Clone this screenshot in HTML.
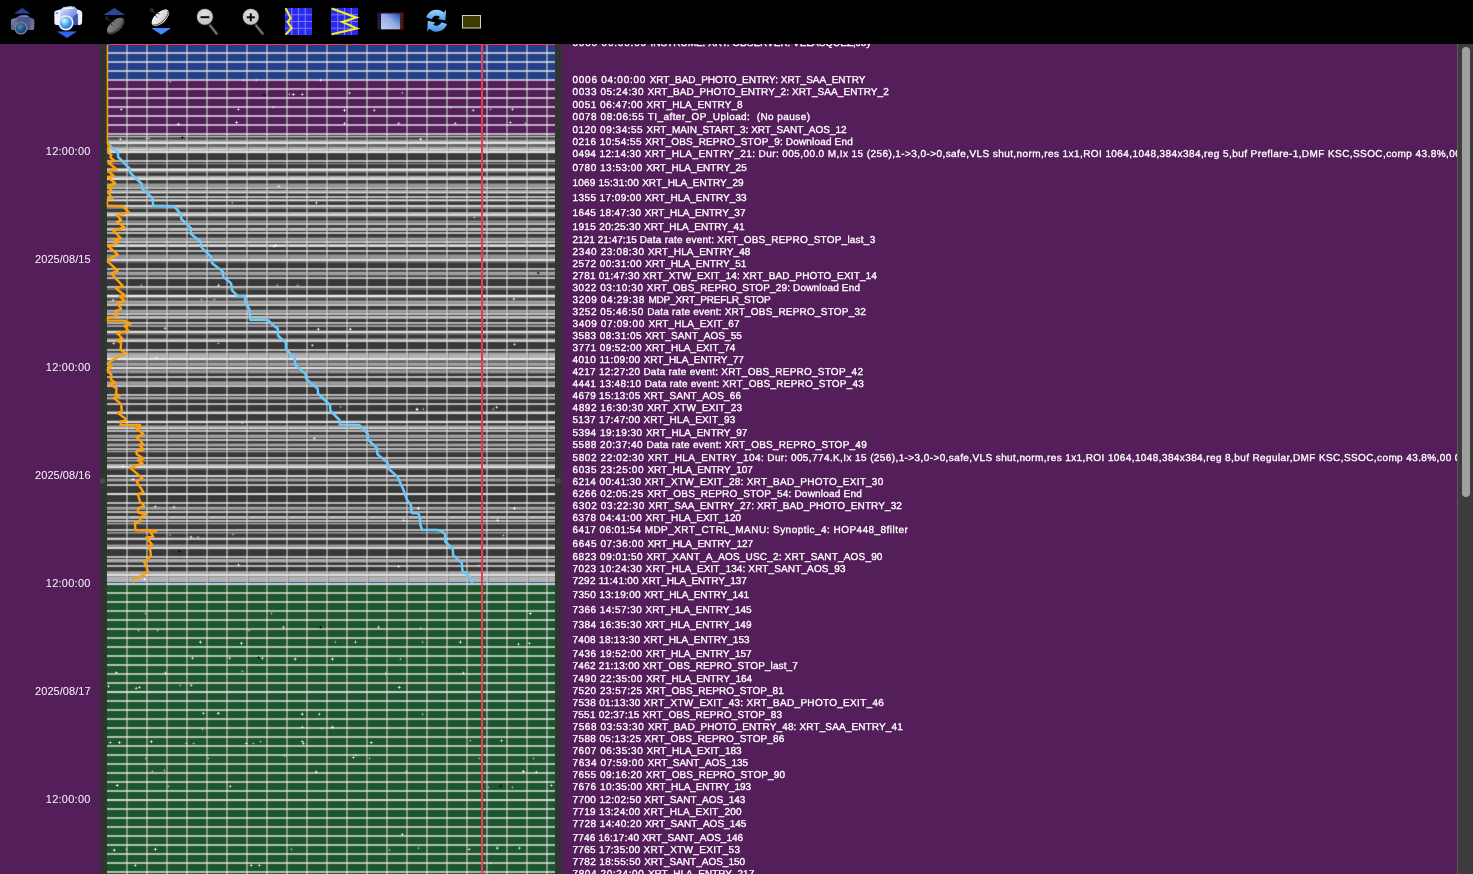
<!DOCTYPE html>
<html lang="en"><head><meta charset="utf-8"><title>XRT Timeline</title>
<style>
html,body{margin:0;padding:0}
body{width:1473px;height:874px;overflow:hidden;position:relative;background:#541e5a;font-family:"Liberation Sans", sans-serif;color:#fff}
#tb{position:absolute;left:0;top:0;width:1473px;height:44px;background:#000}
.lab{position:absolute;right:9.3px;font-size:11px;line-height:13px;white-space:pre;color:#fbf8fc;letter-spacing:0.22px}
.strip{position:absolute;top:44px;height:830px;background:#333}
#txt{position:absolute;left:562px;top:44px;width:894.5px;height:830px;overflow:hidden;will-change:transform}
#labs{position:absolute;left:0;top:44px;width:100px;height:830px;will-change:transform}
.ln{position:absolute;left:10.5px;font-size:10px;line-height:12px;white-space:pre;color:#fff;text-rendering:geometricPrecision;-webkit-text-stroke:0.32px #fff}
.pre{letter-spacing:0.73px}
#sb{position:absolute;left:1457px;top:44px;width:16px;height:830px;background:#3c3c3c;border-left:1px solid #5a5a5a;box-sizing:border-box}
#th{position:absolute;left:4px;top:3px;width:8px;height:450px;border-radius:4px;background:#a0a0a0}
</style></head><body>
<div id="tb"><svg width="500" height="44" viewBox="0 0 500 44" style="position:absolute;left:0;top:0">
<defs>
<radialGradient id="lensD" cx="0.4" cy="0.35" r="0.7"><stop offset="0" stop-color="#4f8f9f"/><stop offset="0.6" stop-color="#1f5a92"/><stop offset="1" stop-color="#12305e"/></radialGradient>
<radialGradient id="lensB" cx="0.35" cy="0.3" r="0.75"><stop offset="0" stop-color="#dcf9ff"/><stop offset="0.5" stop-color="#5cbaf2"/><stop offset="1" stop-color="#1a6ad0"/></radialGradient>
<linearGradient id="bodyD" x1="0" y1="0" x2="1" y2="1"><stop offset="0" stop-color="#8088a2"/><stop offset="0.5" stop-color="#5a6590"/><stop offset="1" stop-color="#767c96"/></linearGradient>
<linearGradient id="bodyB" x1="0" y1="0" x2="1" y2="1"><stop offset="0" stop-color="#eef0ff"/><stop offset="0.5" stop-color="#8fa2e6"/><stop offset="1" stop-color="#e8ecff"/></linearGradient>
<linearGradient id="dishD" x1="0" y1="0" x2="1" y2="1"><stop offset="0" stop-color="#8a8a8a"/><stop offset="1" stop-color="#5a5a5a"/></linearGradient>
<linearGradient id="dishB" x1="0" y1="0" x2="1" y2="1"><stop offset="0" stop-color="#ffffff"/><stop offset="1" stop-color="#c4c4c4"/></linearGradient>
<radialGradient id="mag" cx="0.45" cy="0.3" r="0.8"><stop offset="0" stop-color="#e2e2e2"/><stop offset="1" stop-color="#bcbcbc"/></radialGradient>
<linearGradient id="sky" x1="1" y1="0" x2="0" y2="1"><stop offset="0" stop-color="#1c48b8"/><stop offset="0.45" stop-color="#8fa8e0"/><stop offset="1" stop-color="#c6d4f4"/></linearGradient>
<linearGradient id="ref" x1="0" y1="0" x2="0" y2="1"><stop offset="0" stop-color="#9fd4ff"/><stop offset="1" stop-color="#4a9ce6"/></linearGradient>
<linearGradient id="bodyB2" x1="0" y1="0" x2="1" y2="1"><stop offset="0" stop-color="#e4e9ff"/><stop offset="0.5" stop-color="#8ea2ea"/><stop offset="1" stop-color="#4a66cc"/></linearGradient>
<linearGradient id="ref2" x1="0" y1="0" x2="0" y2="1"><stop offset="0" stop-color="#86c6fa"/><stop offset="1" stop-color="#3f92e0"/></linearGradient>
</defs>
<!-- 1 dim camera + up triangle -->
<polygon points="22.2,8.1 30.6,13.4 14,13.4" fill="#28409c"/>
<g transform="translate(10.9 15.4) scale(0.84 0.78) translate(-54.3 -6.3)">
<g id="camshape">
<path d="M54.3 13.5 Q54 10.8 57 10.3 L60.5 9.6 L63.5 7.2 L70 6.3 L74.5 6.8 L77.2 9.4 L80.6 10.4 Q82.4 11 82.3 14 L82 23 Q81.8 25 79.5 25 L56.5 25 Q54.4 25 54.4 23 Z" fill="url(#bodyD)"/>
</g>
</g>
<path d="M17.5 17.2 L20 15.4 L27.5 15.2 L29.8 17.3 L30.5 29.8 L17 29.8 Z" fill="#46568e" opacity="0.85"/>
<path d="M19 16.6 L21 15.6 L26.6 15.5 L28.6 17 Z" fill="#9aa0b8" opacity="0.8"/>
<circle cx="20.9" cy="28.2" r="6.4" fill="#80859a"/>
<circle cx="20.9" cy="28.2" r="5.4" fill="#565c78"/>
<circle cx="20.9" cy="28.2" r="4.8" fill="url(#lensD)"/>
<!-- 2 bright camera + down triangle -->
<path d="M54.3 13.5 Q54 10.8 57 10.3 L60.5 9.6 L63.5 7.2 L70 6.3 L74.5 6.8 L77.2 9.4 L80.6 10.4 Q82.4 11 82.3 14 L82 23 Q81.8 25 79.5 25 L56.5 25 Q54.4 25 54.4 23 Z" fill="#eef0ff"/>
<path d="M60.6 10.4 L63.6 7.6 L70 6.7 L74.2 7.2 L76.8 9.8 L78 25 L60 25 Z" fill="url(#bodyB2)"/>
<path d="M62.6 9.4 L64.6 7.9 L71.5 7.2 L74 8.8 Z" fill="#f4f6ff"/>
<rect x="55.6" y="12.6" width="2.6" height="0.9" fill="#2a3c9a"/>
<path d="M73.5 16 L78 13.5 L78 25 L72 25 Z" fill="#2f4cb0" opacity="0.8"/>
<circle cx="65.9" cy="22.8" r="7.6" fill="#f2f4ff"/>
<circle cx="65.9" cy="22.8" r="6.3" fill="#a9b4dc"/>
<circle cx="65.9" cy="22.8" r="5.7" fill="url(#lensB)"/>
<polygon points="56.8,31.5 77.1,31.5 67,37.9" fill="#3a5cf2"/>
<!-- 3 dim dish + up triangle -->
<polygon points="114.2,8.1 125.2,15.1 103.5,15.1" fill="#2c4690"/>
<g transform="rotate(-42 115.4 25.6)"><ellipse cx="115.4" cy="26.1" rx="10.8" ry="5.4" fill="#5e5e5e"/><ellipse cx="115.4" cy="25.3" rx="10.3" ry="4.6" fill="url(#dishD)"/><path d="M105.2 26.1 A10.3 4.7 0 0 0 125.6 26.1" fill="none" stroke="#1e1e1e" stroke-width="0.8"/></g>
<circle cx="107.0" cy="18.3" r="1.5" fill="none" stroke="#3a3a3a" stroke-width="0.9"/>
<path d="M108.0 19.4 L112.4 25.8 M108.8 20.0 L114.9 22.2" stroke="#1e1e1e" stroke-width="0.8" fill="none"/>
<!-- 4 bright dish + down triangle -->
<g transform="rotate(-42 160.1 17.5)"><ellipse cx="160.1" cy="18.0" rx="10.8" ry="5.4" fill="#d8d8d8"/><ellipse cx="160.1" cy="17.2" rx="10.3" ry="4.6" fill="url(#dishB)"/><path d="M149.9 18.0 A10.3 4.7 0 0 0 170.3 18.0" fill="none" stroke="#303030" stroke-width="0.8"/></g>
<circle cx="151.7" cy="10.2" r="1.5" fill="none" stroke="#555" stroke-width="0.9"/>
<path d="M152.7 11.3 L157.1 17.7 M153.5 11.9 L159.6 14.1" stroke="#303030" stroke-width="0.8" fill="none"/>
<polygon points="151.3,28.1 171,28.1 161.3,34.8" fill="#4a86ff"/>
<!-- 5 zoom out -->
<path d="M210 25.4 L216.6 33.6" stroke="#333" stroke-width="3.4" stroke-linecap="round"/>
<path d="M210 25.4 L216.6 33.6" stroke="#8c8c8c" stroke-width="1.2" stroke-linecap="round"/>
<circle cx="204.9" cy="16.9" r="8.6" fill="#262626"/>
<circle cx="204.9" cy="16.9" r="7.9" fill="url(#mag)"/>
<rect x="200.5" y="16.2" width="8.8" height="2" fill="#0a0a0a"/>
<!-- 6 zoom in -->
<path d="M256 25.4 L262.6 33.6" stroke="#333" stroke-width="3.4" stroke-linecap="round"/>
<path d="M256 25.4 L262.6 33.6" stroke="#8c8c8c" stroke-width="1.2" stroke-linecap="round"/>
<circle cx="250.8" cy="16.9" r="8.6" fill="#262626"/>
<circle cx="250.8" cy="16.9" r="7.9" fill="url(#mag)"/>
<rect x="246.7" y="16.3" width="8.2" height="2" fill="#0a0a0a"/>
<rect x="249.8" y="13.3" width="2" height="8" fill="#0a0a0a"/>
<!-- 7 grid + line -->
<rect x="285" y="8" width="27" height="27" fill="#2828f0"/>
<path d="M291.75 8V35M298.5 8V35M305.25 8V35M285 14.75H312M285 21.5H312M285 28.25H312" stroke="#fff" stroke-opacity="0.38" stroke-width="1.1"/>
<polyline points="285.6,8.2 290.7,18.1 287.6,21.9 291.6,28.1 285.6,34.6" fill="none" stroke="#f2f21a" stroke-width="2.1"/>
<!-- 8 grid + zigzag -->
<rect x="331" y="8" width="27" height="27" fill="#2828f0"/>
<path d="M337.75 8V35M344.5 8V35M351.25 8V35M331 14.75H358M331 21.5H358M331 28.25H358" stroke="#fff" stroke-opacity="0.38" stroke-width="1.1"/>
<polyline points="331.6,8.6 356.4,17.5 342.2,21.9 356.9,28.4 331.6,34.3" fill="none" stroke="#f2f21a" stroke-width="2.1"/>
<!-- 9 film -->
<rect x="377.4" y="12.1" width="13" height="18" fill="#15152e"/>
<rect x="390.4" y="12.1" width="13.4" height="18" fill="#480c0c"/>
<rect x="381" y="13.4" width="19.2" height="15.8" rx="1" fill="url(#sky)"/>
<path d="M379 14v1.5M379 17v1.5M379 20v1.5M379 23v1.5M379 26v1.5M402 14v1.5M402 17v1.5M402 20v1.5M402 23v1.5M402 26v1.5" stroke="#3c3c44" stroke-width="1.2"/>
<!-- 10 refresh -->
<path d="M426.14 17.30 A11.0 11.0 0 0 1 443.96 12.53 L445.98 9.52 L445.40 20.55 L438.01 19.01 L439.95 16.98 A5.0 5.0 0 0 0 431.84 19.15 Z" fill="url(#ref)"/>
<path d="M447.06 24.10 A11.0 11.0 0 0 1 429.24 28.87 L427.22 31.88 L427.80 20.85 L435.19 22.39 L433.25 24.42 A5.0 5.0 0 0 0 441.36 22.25 Z" fill="url(#ref2)"/>
<!-- 11 olive -->
<rect x="462.5" y="15.5" width="18" height="12.5" fill="#3c3c00" stroke="#d6d0c2" stroke-width="1"/>
</svg>
</div>
<div id="labs"><div class="lab" style="top:100.69px;letter-spacing:0.26px">12:00:00</div><div class="lab" style="top:208.69px;letter-spacing:0.06px">2025/08/15</div><div class="lab" style="top:316.69px;letter-spacing:0.26px">12:00:00</div><div class="lab" style="top:424.69px;letter-spacing:0.06px">2025/08/16</div><div class="lab" style="top:532.69px;letter-spacing:0.26px">12:00:00</div><div class="lab" style="top:640.69px;letter-spacing:0.06px">2025/08/17</div><div class="lab" style="top:748.69px;letter-spacing:0.26px">12:00:00</div></div>
<div class="strip" style="left:100px;width:7px"></div>
<div class="strip" style="left:555px;width:7px"></div>
<svg width="449" height="830" viewBox="106 44 449 830" style="position:absolute;left:106px;top:44px;overflow:hidden">
<defs><clipPath id="oc"><rect x="106.7" y="45" width="460" height="840"/></clipPath></defs>
<g shape-rendering="crispEdges">
<rect x="107" y="44" width="448" height="36" fill="#22408c"/>
<rect x="107" y="80" width="448" height="55" fill="#541e5a"/>
<rect x="107" y="135" width="448" height="1" fill="#626262"/>
<rect x="107" y="136" width="448" height="1" fill="#a9a9a9"/>
<rect x="107" y="137" width="448" height="1" fill="#686868"/>
<rect x="107" y="138" width="448" height="1" fill="#4a4a4a"/>
<rect x="107" y="139" width="448" height="1" fill="#626262"/>
<rect x="107" y="140" width="448" height="1" fill="#949494"/>
<rect x="107" y="141" width="448" height="1" fill="#ababab"/>
<rect x="107" y="142" width="448" height="1" fill="#c4c4c4"/>
<rect x="107" y="143" width="448" height="1" fill="#ababab"/>
<rect x="107" y="144" width="448" height="1" fill="#6f6f6f"/>
<rect x="107" y="145" width="448" height="1" fill="#676767"/>
<rect x="107" y="146" width="448" height="1" fill="#737373"/>
<rect x="107" y="147" width="448" height="1" fill="#a1a1a1"/>
<rect x="107" y="148" width="448" height="1" fill="#b1b1b1"/>
<rect x="107" y="149" width="448" height="1" fill="#d0d0d0"/>
<rect x="107" y="150" width="448" height="1" fill="#bbbbbb"/>
<rect x="107" y="151" width="448" height="1" fill="#949494"/>
<rect x="107" y="152" width="448" height="1" fill="#7f7f7f"/>
<rect x="107" y="153" width="448" height="1" fill="#424242"/>
<rect x="107" y="154" width="448" height="8" fill="#383838"/>
<rect x="107" y="162" width="448" height="1" fill="#414141"/>
<rect x="107" y="163" width="448" height="1" fill="#767676"/>
<rect x="107" y="164" width="448" height="1" fill="#575757"/>
<rect x="107" y="165" width="448" height="1" fill="#3b3b3b"/>
<rect x="107" y="166" width="448" height="1" fill="#383838"/>
<rect x="107" y="167" width="448" height="1" fill="#444444"/>
<rect x="107" y="168" width="448" height="1" fill="#979797"/>
<rect x="107" y="169" width="448" height="1" fill="#bdbdbd"/>
<rect x="107" y="170" width="448" height="1" fill="#b4b4b4"/>
<rect x="107" y="171" width="448" height="1" fill="#7e7e7e"/>
<rect x="107" y="172" width="448" height="1" fill="#6b6b6b"/>
<rect x="107" y="173" width="448" height="1" fill="#3f3f3f"/>
<rect x="107" y="174" width="448" height="1" fill="#3b3b3b"/>
<rect x="107" y="175" width="448" height="1" fill="#575757"/>
<rect x="107" y="176" width="448" height="1" fill="#9f9f9f"/>
<rect x="107" y="177" width="448" height="1" fill="#b7b7b7"/>
<rect x="107" y="178" width="448" height="1" fill="#bfbfbf"/>
<rect x="107" y="179" width="448" height="1" fill="#999999"/>
<rect x="107" y="180" width="448" height="1" fill="#454545"/>
<rect x="107" y="181" width="448" height="1" fill="#383838"/>
<rect x="107" y="182" width="448" height="1" fill="#3e3e3e"/>
<rect x="107" y="183" width="448" height="1" fill="#686868"/>
<rect x="107" y="184" width="448" height="1" fill="#939393"/>
<rect x="107" y="185" width="448" height="1" fill="#999999"/>
<rect x="107" y="186" width="448" height="1" fill="#8d8d8d"/>
<rect x="107" y="187" width="448" height="1" fill="#444444"/>
<rect x="107" y="188" width="448" height="1" fill="#383838"/>
<rect x="107" y="189" width="448" height="1" fill="#444444"/>
<rect x="107" y="190" width="448" height="1" fill="#909090"/>
<rect x="107" y="191" width="448" height="1" fill="#b2b2b2"/>
<rect x="107" y="192" width="448" height="1" fill="#cecece"/>
<rect x="107" y="193" width="448" height="1" fill="#848484"/>
<rect x="107" y="194" width="448" height="1" fill="#414141"/>
<rect x="107" y="195" width="448" height="3" fill="#383838"/>
<rect x="107" y="198" width="448" height="1" fill="#474747"/>
<rect x="107" y="199" width="448" height="1" fill="#aaaaaa"/>
<rect x="107" y="200" width="448" height="1" fill="#cccccc"/>
<rect x="107" y="201" width="448" height="1" fill="#767676"/>
<rect x="107" y="202" width="448" height="1" fill="#3f3f3f"/>
<rect x="107" y="203" width="448" height="1" fill="#3a3a3a"/>
<rect x="107" y="204" width="448" height="1" fill="#4e4e4e"/>
<rect x="107" y="205" width="448" height="1" fill="#808080"/>
<rect x="107" y="206" width="448" height="1" fill="#888888"/>
<rect x="107" y="207" width="448" height="1" fill="#878787"/>
<rect x="107" y="208" width="448" height="1" fill="#787878"/>
<rect x="107" y="209" width="448" height="1" fill="#414141"/>
<rect x="107" y="210" width="448" height="1" fill="#383838"/>
<rect x="107" y="211" width="448" height="1" fill="#444444"/>
<rect x="107" y="212" width="448" height="1" fill="#979797"/>
<rect x="107" y="213" width="448" height="1" fill="#b9b9b9"/>
<rect x="107" y="214" width="448" height="1" fill="#9e9e9e"/>
<rect x="107" y="215" width="448" height="1" fill="#939393"/>
<rect x="107" y="216" width="448" height="1" fill="#6f6f6f"/>
<rect x="107" y="217" width="448" height="1" fill="#5a5a5a"/>
<rect x="107" y="218" width="448" height="1" fill="#3c3c3c"/>
<rect x="107" y="219" width="448" height="1" fill="#3d3d3d"/>
<rect x="107" y="220" width="448" height="1" fill="#616161"/>
<rect x="107" y="221" width="448" height="1" fill="#8e8e8e"/>
<rect x="107" y="222" width="448" height="1" fill="#777777"/>
<rect x="107" y="223" width="448" height="1" fill="#4e4e4e"/>
<rect x="107" y="224" width="448" height="1" fill="#464646"/>
<rect x="107" y="225" width="448" height="1" fill="#3a3a3a"/>
<rect x="107" y="226" width="448" height="1" fill="#3c3c3c"/>
<rect x="107" y="227" width="448" height="1" fill="#5f5f5f"/>
<rect x="107" y="228" width="448" height="1" fill="#b5b5b5"/>
<rect x="107" y="229" width="448" height="1" fill="#c0c0c0"/>
<rect x="107" y="230" width="448" height="1" fill="#a0a0a0"/>
<rect x="107" y="231" width="448" height="1" fill="#464646"/>
<rect x="107" y="232" width="448" height="4" fill="#383838"/>
<rect x="107" y="236" width="448" height="1" fill="#3d3d3d"/>
<rect x="107" y="237" width="448" height="1" fill="#686868"/>
<rect x="107" y="238" width="448" height="1" fill="#9e9e9e"/>
<rect x="107" y="239" width="448" height="1" fill="#999999"/>
<rect x="107" y="240" width="448" height="1" fill="#868686"/>
<rect x="107" y="241" width="448" height="1" fill="#5a5a5a"/>
<rect x="107" y="242" width="448" height="1" fill="#505050"/>
<rect x="107" y="243" width="448" height="1" fill="#4b4b4b"/>
<rect x="107" y="244" width="448" height="1" fill="#b0b0b0"/>
<rect x="107" y="245" width="448" height="1" fill="#d5d5d5"/>
<rect x="107" y="246" width="448" height="1" fill="#c5c5c5"/>
<rect x="107" y="247" width="448" height="1" fill="#4b4b4b"/>
<rect x="107" y="248" width="448" height="5" fill="#383838"/>
<rect x="107" y="253" width="448" height="1" fill="#3e3e3e"/>
<rect x="107" y="254" width="448" height="1" fill="#666666"/>
<rect x="107" y="255" width="448" height="1" fill="#8e8e8e"/>
<rect x="107" y="256" width="448" height="2" fill="#949494"/>
<rect x="107" y="258" width="448" height="1" fill="#929292"/>
<rect x="107" y="259" width="448" height="1" fill="#909090"/>
<rect x="107" y="260" width="448" height="1" fill="#8b8b8b"/>
<rect x="107" y="261" width="448" height="1" fill="#6b6b6b"/>
<rect x="107" y="262" width="448" height="1" fill="#606060"/>
<rect x="107" y="263" width="448" height="1" fill="#3e3e3e"/>
<rect x="107" y="264" width="448" height="6" fill="#383838"/>
<rect x="107" y="270" width="448" height="1" fill="#3c3c3c"/>
<rect x="107" y="271" width="448" height="1" fill="#5f5f5f"/>
<rect x="107" y="272" width="448" height="1" fill="#9e9e9e"/>
<rect x="107" y="273" width="448" height="1" fill="#a0a0a0"/>
<rect x="107" y="274" width="448" height="1" fill="#949494"/>
<rect x="107" y="275" width="448" height="1" fill="#686868"/>
<rect x="107" y="276" width="448" height="1" fill="#3e3e3e"/>
<rect x="107" y="277" width="448" height="8" fill="#383838"/>
<rect x="107" y="285" width="448" height="1" fill="#3a3a3a"/>
<rect x="107" y="286" width="448" height="1" fill="#464646"/>
<rect x="107" y="287" width="448" height="1" fill="#4b4b4b"/>
<rect x="107" y="288" width="448" height="1" fill="#616161"/>
<rect x="107" y="289" width="448" height="1" fill="#636363"/>
<rect x="107" y="290" width="448" height="1" fill="#3e3e3e"/>
<rect x="107" y="291" width="448" height="2" fill="#383838"/>
<rect x="107" y="293" width="448" height="1" fill="#3c3c3c"/>
<rect x="107" y="294" width="448" height="1" fill="#636363"/>
<rect x="107" y="295" width="448" height="1" fill="#c1c1c1"/>
<rect x="107" y="296" width="448" height="1" fill="#c5c5c5"/>
<rect x="107" y="297" width="448" height="1" fill="#828282"/>
<rect x="107" y="298" width="448" height="1" fill="#626262"/>
<rect x="107" y="299" width="448" height="1" fill="#444444"/>
<rect x="107" y="300" width="448" height="1" fill="#717171"/>
<rect x="107" y="301" width="448" height="1" fill="#9e9e9e"/>
<rect x="107" y="302" width="448" height="1" fill="#9b9b9b"/>
<rect x="107" y="303" width="448" height="1" fill="#919191"/>
<rect x="107" y="304" width="448" height="1" fill="#606060"/>
<rect x="107" y="305" width="448" height="1" fill="#545454"/>
<rect x="107" y="306" width="448" height="1" fill="#3c3c3c"/>
<rect x="107" y="307" width="448" height="1" fill="#383838"/>
<rect x="107" y="308" width="448" height="1" fill="#3b3b3b"/>
<rect x="107" y="309" width="448" height="1" fill="#575757"/>
<rect x="107" y="310" width="448" height="2" fill="#9c9c9c"/>
<rect x="107" y="312" width="448" height="1" fill="#8b8b8b"/>
<rect x="107" y="313" width="448" height="1" fill="#585858"/>
<rect x="107" y="314" width="448" height="1" fill="#4d4d4d"/>
<rect x="107" y="315" width="448" height="1" fill="#4c4c4c"/>
<rect x="107" y="316" width="448" height="1" fill="#b4b4b4"/>
<rect x="107" y="317" width="448" height="1" fill="#c1c1c1"/>
<rect x="107" y="318" width="448" height="1" fill="#999999"/>
<rect x="107" y="319" width="448" height="1" fill="#454545"/>
<rect x="107" y="320" width="448" height="3" fill="#383838"/>
<rect x="107" y="323" width="448" height="1" fill="#393939"/>
<rect x="107" y="324" width="448" height="1" fill="#4b4b4b"/>
<rect x="107" y="325" width="448" height="1" fill="#8f8f8f"/>
<rect x="107" y="326" width="448" height="1" fill="#8d8d8d"/>
<rect x="107" y="327" width="448" height="1" fill="#444444"/>
<rect x="107" y="328" width="448" height="1" fill="#383838"/>
<rect x="107" y="329" width="448" height="1" fill="#3d3d3d"/>
<rect x="107" y="330" width="448" height="1" fill="#646464"/>
<rect x="107" y="331" width="448" height="1" fill="#a7a7a7"/>
<rect x="107" y="332" width="448" height="1" fill="#a2a2a2"/>
<rect x="107" y="333" width="448" height="1" fill="#757575"/>
<rect x="107" y="334" width="448" height="1" fill="#616161"/>
<rect x="107" y="335" width="448" height="1" fill="#3d3d3d"/>
<rect x="107" y="336" width="448" height="1" fill="#383838"/>
<rect x="107" y="337" width="448" height="1" fill="#3e3e3e"/>
<rect x="107" y="338" width="448" height="1" fill="#6a6a6a"/>
<rect x="107" y="339" width="448" height="1" fill="#9f9f9f"/>
<rect x="107" y="340" width="448" height="1" fill="#838383"/>
<rect x="107" y="341" width="448" height="1" fill="#676767"/>
<rect x="107" y="342" width="448" height="1" fill="#3e3e3e"/>
<rect x="107" y="343" width="448" height="8" fill="#383838"/>
<rect x="107" y="351" width="448" height="1" fill="#3d3d3d"/>
<rect x="107" y="352" width="448" height="1" fill="#686868"/>
<rect x="107" y="353" width="448" height="1" fill="#a0a0a0"/>
<rect x="107" y="354" width="448" height="1" fill="#ababab"/>
<rect x="107" y="355" width="448" height="1" fill="#b0b0b0"/>
<rect x="107" y="356" width="448" height="1" fill="#b1b1b1"/>
<rect x="107" y="357" width="448" height="1" fill="#b8b8b8"/>
<rect x="107" y="358" width="448" height="1" fill="#c9c9c9"/>
<rect x="107" y="359" width="448" height="1" fill="#c0c0c0"/>
<rect x="107" y="360" width="448" height="1" fill="#767676"/>
<rect x="107" y="361" width="448" height="1" fill="#6a6a6a"/>
<rect x="107" y="362" width="448" height="1" fill="#717171"/>
<rect x="107" y="363" width="448" height="1" fill="#9f9f9f"/>
<rect x="107" y="364" width="448" height="1" fill="#a0a0a0"/>
<rect x="107" y="365" width="448" height="1" fill="#929292"/>
<rect x="107" y="366" width="448" height="1" fill="#646464"/>
<rect x="107" y="367" width="448" height="1" fill="#898989"/>
<rect x="107" y="368" width="448" height="1" fill="#8a8a8a"/>
<rect x="107" y="369" width="448" height="1" fill="#6c6c6c"/>
<rect x="107" y="370" width="448" height="1" fill="#888888"/>
<rect x="107" y="371" width="448" height="1" fill="#979797"/>
<rect x="107" y="372" width="448" height="1" fill="#919191"/>
<rect x="107" y="373" width="448" height="1" fill="#5a5a5a"/>
<rect x="107" y="374" width="448" height="1" fill="#3b3b3b"/>
<rect x="107" y="375" width="448" height="5" fill="#383838"/>
<rect x="107" y="380" width="448" height="1" fill="#3f3f3f"/>
<rect x="107" y="381" width="448" height="1" fill="#717171"/>
<rect x="107" y="382" width="448" height="1" fill="#9e9e9e"/>
<rect x="107" y="383" width="448" height="1" fill="#9b9b9b"/>
<rect x="107" y="384" width="448" height="1" fill="#8f8f8f"/>
<rect x="107" y="385" width="448" height="1" fill="#525252"/>
<rect x="107" y="386" width="448" height="1" fill="#464646"/>
<rect x="107" y="387" width="448" height="1" fill="#3a3a3a"/>
<rect x="107" y="388" width="448" height="8" fill="#383838"/>
<rect x="107" y="396" width="448" height="1" fill="#454545"/>
<rect x="107" y="397" width="448" height="1" fill="#999999"/>
<rect x="107" y="398" width="448" height="1" fill="#9e9e9e"/>
<rect x="107" y="399" width="448" height="1" fill="#676767"/>
<rect x="107" y="400" width="448" height="1" fill="#3d3d3d"/>
<rect x="107" y="401" width="448" height="9" fill="#383838"/>
<rect x="107" y="410" width="448" height="1" fill="#404040"/>
<rect x="107" y="411" width="448" height="1" fill="#787878"/>
<rect x="107" y="412" width="448" height="1" fill="#8c8c8c"/>
<rect x="107" y="413" width="448" height="1" fill="#787878"/>
<rect x="107" y="414" width="448" height="1" fill="#404040"/>
<rect x="107" y="415" width="448" height="4" fill="#383838"/>
<rect x="107" y="419" width="448" height="1" fill="#3d3d3d"/>
<rect x="107" y="420" width="448" height="1" fill="#616161"/>
<rect x="107" y="421" width="448" height="1" fill="#919191"/>
<rect x="107" y="422" width="448" height="1" fill="#8c8c8c"/>
<rect x="107" y="423" width="448" height="1" fill="#444444"/>
<rect x="107" y="424" width="448" height="1" fill="#3f3f3f"/>
<rect x="107" y="425" width="448" height="1" fill="#707070"/>
<rect x="107" y="426" width="448" height="1" fill="#999999"/>
<rect x="107" y="427" width="448" height="1" fill="#bcbcbc"/>
<rect x="107" y="428" width="448" height="1" fill="#cbcbcb"/>
<rect x="107" y="429" width="448" height="1" fill="#686868"/>
<rect x="107" y="430" width="448" height="1" fill="#3c3c3c"/>
<rect x="107" y="431" width="448" height="2" fill="#383838"/>
<rect x="107" y="433" width="448" height="1" fill="#3c3c3c"/>
<rect x="107" y="434" width="448" height="1" fill="#5f5f5f"/>
<rect x="107" y="435" width="448" height="1" fill="#9d9d9d"/>
<rect x="107" y="436" width="448" height="1" fill="#9c9c9c"/>
<rect x="107" y="437" width="448" height="1" fill="#8f8f8f"/>
<rect x="107" y="438" width="448" height="1" fill="#4b4b4b"/>
<rect x="107" y="439" width="448" height="1" fill="#393939"/>
<rect x="107" y="440" width="448" height="2" fill="#383838"/>
<rect x="107" y="442" width="448" height="1" fill="#3d3d3d"/>
<rect x="107" y="443" width="448" height="1" fill="#676767"/>
<rect x="107" y="444" width="448" height="2" fill="#9e9e9e"/>
<rect x="107" y="446" width="448" height="1" fill="#676767"/>
<rect x="107" y="447" width="448" height="1" fill="#3d3d3d"/>
<rect x="107" y="448" width="448" height="1" fill="#383838"/>
<rect x="107" y="449" width="448" height="1" fill="#3b3b3b"/>
<rect x="107" y="450" width="448" height="1" fill="#585858"/>
<rect x="107" y="451" width="448" height="1" fill="#969696"/>
<rect x="107" y="452" width="448" height="1" fill="#585858"/>
<rect x="107" y="453" width="448" height="1" fill="#3b3b3b"/>
<rect x="107" y="454" width="448" height="5" fill="#383838"/>
<rect x="107" y="459" width="448" height="1" fill="#444444"/>
<rect x="107" y="460" width="448" height="1" fill="#8d8d8d"/>
<rect x="107" y="461" width="448" height="1" fill="#707070"/>
<rect x="107" y="462" width="448" height="1" fill="#404040"/>
<rect x="107" y="463" width="448" height="1" fill="#4f4f4f"/>
<rect x="107" y="464" width="448" height="1" fill="#a0a0a0"/>
<rect x="107" y="465" width="448" height="1" fill="#aeaeae"/>
<rect x="107" y="466" width="448" height="1" fill="#b2b2b2"/>
<rect x="107" y="467" width="448" height="1" fill="#ababab"/>
<rect x="107" y="468" width="448" height="1" fill="#767676"/>
<rect x="107" y="469" width="448" height="1" fill="#5d5d5d"/>
<rect x="107" y="470" width="448" height="1" fill="#3d3d3d"/>
<rect x="107" y="471" width="448" height="6" fill="#383838"/>
<rect x="107" y="477" width="448" height="1" fill="#3d3d3d"/>
<rect x="107" y="478" width="448" height="1" fill="#676767"/>
<rect x="107" y="479" width="448" height="2" fill="#9e9e9e"/>
<rect x="107" y="481" width="448" height="1" fill="#676767"/>
<rect x="107" y="482" width="448" height="1" fill="#3d3d3d"/>
<rect x="107" y="483" width="448" height="9" fill="#383838"/>
<rect x="107" y="492" width="448" height="1" fill="#434343"/>
<rect x="107" y="493" width="448" height="2" fill="#858585"/>
<rect x="107" y="495" width="448" height="1" fill="#434343"/>
<rect x="107" y="496" width="448" height="9" fill="#383838"/>
<rect x="107" y="505" width="448" height="1" fill="#3b3b3b"/>
<rect x="107" y="506" width="448" height="1" fill="#575757"/>
<rect x="107" y="507" width="448" height="1" fill="#9c9c9c"/>
<rect x="107" y="508" width="448" height="1" fill="#9b9b9b"/>
<rect x="107" y="509" width="448" height="1" fill="#868686"/>
<rect x="107" y="510" width="448" height="1" fill="#424242"/>
<rect x="107" y="511" width="448" height="4" fill="#383838"/>
<rect x="107" y="515" width="448" height="1" fill="#484848"/>
<rect x="107" y="516" width="448" height="1" fill="#afafaf"/>
<rect x="107" y="517" width="448" height="1" fill="#bdbdbd"/>
<rect x="107" y="518" width="448" height="1" fill="#9e9e9e"/>
<rect x="107" y="519" width="448" height="1" fill="#464646"/>
<rect x="107" y="520" width="448" height="1" fill="#383838"/>
<rect x="107" y="521" width="448" height="1" fill="#393939"/>
<rect x="107" y="522" width="448" height="1" fill="#4f4f4f"/>
<rect x="107" y="523" width="448" height="1" fill="#969696"/>
<rect x="107" y="524" width="448" height="1" fill="#616161"/>
<rect x="107" y="525" width="448" height="1" fill="#3c3c3c"/>
<rect x="107" y="526" width="448" height="5" fill="#383838"/>
<rect x="107" y="531" width="448" height="1" fill="#444444"/>
<rect x="107" y="532" width="448" height="1" fill="#888888"/>
<rect x="107" y="533" width="448" height="1" fill="#717171"/>
<rect x="107" y="534" width="448" height="1" fill="#3f3f3f"/>
<rect x="107" y="535" width="448" height="1" fill="#383838"/>
<rect x="107" y="536" width="448" height="1" fill="#3f3f3f"/>
<rect x="107" y="537" width="448" height="1" fill="#6c6c6c"/>
<rect x="107" y="538" width="448" height="1" fill="#7f7f7f"/>
<rect x="107" y="539" width="448" height="1" fill="#5a5a5a"/>
<rect x="107" y="540" width="448" height="1" fill="#3c3c3c"/>
<rect x="107" y="541" width="448" height="2" fill="#383838"/>
<rect x="107" y="543" width="448" height="1" fill="#3e3e3e"/>
<rect x="107" y="544" width="448" height="1" fill="#686868"/>
<rect x="107" y="545" width="448" height="1" fill="#939393"/>
<rect x="107" y="546" width="448" height="1" fill="#959595"/>
<rect x="107" y="547" width="448" height="1" fill="#919191"/>
<rect x="107" y="548" width="448" height="1" fill="#858585"/>
<rect x="107" y="549" width="448" height="1" fill="#434343"/>
<rect x="107" y="550" width="448" height="8" fill="#383838"/>
<rect x="107" y="558" width="448" height="1" fill="#464646"/>
<rect x="107" y="559" width="448" height="1" fill="#9f9f9f"/>
<rect x="107" y="560" width="448" height="1" fill="#acacac"/>
<rect x="107" y="561" width="448" height="1" fill="#a4a4a4"/>
<rect x="107" y="562" width="448" height="1" fill="#6a6a6a"/>
<rect x="107" y="563" width="448" height="1" fill="#3e3e3e"/>
<rect x="107" y="564" width="448" height="6" fill="#383838"/>
<rect x="107" y="570" width="448" height="1" fill="#424242"/>
<rect x="107" y="571" width="448" height="1" fill="#868686"/>
<rect x="107" y="572" width="448" height="1" fill="#a9a9a9"/>
<rect x="107" y="573" width="448" height="1" fill="#adadad"/>
<rect x="107" y="574" width="448" height="1" fill="#b1b1b1"/>
<rect x="107" y="575" width="448" height="1" fill="#acacac"/>
<rect x="107" y="576" width="448" height="1" fill="#9e9e9e"/>
<rect x="107" y="577" width="448" height="1" fill="#aeaeae"/>
<rect x="107" y="578" width="448" height="1" fill="#b2b2b2"/>
<rect x="107" y="579" width="448" height="2" fill="#b3b3b3"/>
<rect x="107" y="581" width="448" height="1" fill="#a0a8c4"/>
<rect x="107" y="582" width="448" height="1" fill="#3a6a80"/>
<rect x="107" y="583" width="448" height="291" fill="#1c562c"/>
</g>
<g>
<rect x="128.2" y="45" width="0.8" height="830" fill="rgba(0,0,0,0.2)"/>
<rect x="148.2" y="45" width="0.8" height="830" fill="rgba(0,0,0,0.2)"/>
<rect x="168.2" y="45" width="0.8" height="830" fill="rgba(0,0,0,0.2)"/>
<rect x="188.2" y="45" width="0.8" height="830" fill="rgba(0,0,0,0.2)"/>
<rect x="208.2" y="45" width="0.8" height="830" fill="rgba(0,0,0,0.2)"/>
<rect x="228.2" y="45" width="0.8" height="830" fill="rgba(0,0,0,0.2)"/>
<rect x="248.2" y="45" width="0.8" height="830" fill="rgba(0,0,0,0.2)"/>
<rect x="268.2" y="45" width="0.8" height="830" fill="rgba(0,0,0,0.2)"/>
<rect x="288.2" y="45" width="0.8" height="830" fill="rgba(0,0,0,0.2)"/>
<rect x="308.2" y="45" width="0.8" height="830" fill="rgba(0,0,0,0.2)"/>
<rect x="328.2" y="45" width="0.8" height="830" fill="rgba(0,0,0,0.2)"/>
<rect x="348.2" y="45" width="0.8" height="830" fill="rgba(0,0,0,0.2)"/>
<rect x="368.2" y="45" width="0.8" height="830" fill="rgba(0,0,0,0.2)"/>
<rect x="388.2" y="45" width="0.8" height="830" fill="rgba(0,0,0,0.2)"/>
<rect x="408.2" y="45" width="0.8" height="830" fill="rgba(0,0,0,0.2)"/>
<rect x="428.2" y="45" width="0.8" height="830" fill="rgba(0,0,0,0.2)"/>
<rect x="448.2" y="45" width="0.8" height="830" fill="rgba(0,0,0,0.2)"/>
<rect x="468.2" y="45" width="0.8" height="830" fill="rgba(0,0,0,0.2)"/>
<rect x="488.2" y="45" width="0.8" height="830" fill="rgba(0,0,0,0.2)"/>
<rect x="508.2" y="45" width="0.8" height="830" fill="rgba(0,0,0,0.2)"/>
<rect x="528.2" y="45" width="0.8" height="830" fill="rgba(0,0,0,0.2)"/>
<rect x="548.2" y="45" width="0.8" height="830" fill="rgba(0,0,0,0.2)"/>
<rect x="107" y="54.2" width="448" height="0.8" fill="rgba(0,0,0,0.2)"/>
<rect x="107" y="63.2" width="448" height="0.8" fill="rgba(0,0,0,0.2)"/>
<rect x="107" y="72.2" width="448" height="0.8" fill="rgba(0,0,0,0.2)"/>
<rect x="107" y="81.2" width="448" height="0.8" fill="rgba(0,0,0,0.2)"/>
<rect x="107" y="90.2" width="448" height="0.8" fill="rgba(0,0,0,0.2)"/>
<rect x="107" y="99.2" width="448" height="0.8" fill="rgba(0,0,0,0.2)"/>
<rect x="107" y="108.2" width="448" height="0.8" fill="rgba(0,0,0,0.2)"/>
<rect x="107" y="117.2" width="448" height="0.8" fill="rgba(0,0,0,0.2)"/>
<rect x="107" y="126.2" width="448" height="0.8" fill="rgba(0,0,0,0.2)"/>
<rect x="107" y="135.2" width="448" height="0.8" fill="rgba(0,0,0,0.2)"/>
<rect x="107" y="144.2" width="448" height="0.8" fill="rgba(0,0,0,0.08)"/>
<rect x="107" y="153.2" width="448" height="0.8" fill="rgba(0,0,0,0.08)"/>
<rect x="107" y="162.2" width="448" height="0.8" fill="rgba(0,0,0,0.08)"/>
<rect x="107" y="171.2" width="448" height="0.8" fill="rgba(0,0,0,0.08)"/>
<rect x="107" y="180.2" width="448" height="0.8" fill="rgba(0,0,0,0.08)"/>
<rect x="107" y="189.2" width="448" height="0.8" fill="rgba(0,0,0,0.08)"/>
<rect x="107" y="198.2" width="448" height="0.8" fill="rgba(0,0,0,0.08)"/>
<rect x="107" y="207.2" width="448" height="0.8" fill="rgba(0,0,0,0.08)"/>
<rect x="107" y="216.2" width="448" height="0.8" fill="rgba(0,0,0,0.08)"/>
<rect x="107" y="225.2" width="448" height="0.8" fill="rgba(0,0,0,0.08)"/>
<rect x="107" y="234.2" width="448" height="0.8" fill="rgba(0,0,0,0.08)"/>
<rect x="107" y="243.2" width="448" height="0.8" fill="rgba(0,0,0,0.08)"/>
<rect x="107" y="252.2" width="448" height="0.8" fill="rgba(0,0,0,0.08)"/>
<rect x="107" y="261.2" width="448" height="0.8" fill="rgba(0,0,0,0.08)"/>
<rect x="107" y="270.2" width="448" height="0.8" fill="rgba(0,0,0,0.08)"/>
<rect x="107" y="279.2" width="448" height="0.8" fill="rgba(0,0,0,0.08)"/>
<rect x="107" y="288.2" width="448" height="0.8" fill="rgba(0,0,0,0.08)"/>
<rect x="107" y="297.2" width="448" height="0.8" fill="rgba(0,0,0,0.08)"/>
<rect x="107" y="306.2" width="448" height="0.8" fill="rgba(0,0,0,0.08)"/>
<rect x="107" y="315.2" width="448" height="0.8" fill="rgba(0,0,0,0.08)"/>
<rect x="107" y="324.2" width="448" height="0.8" fill="rgba(0,0,0,0.08)"/>
<rect x="107" y="333.2" width="448" height="0.8" fill="rgba(0,0,0,0.08)"/>
<rect x="107" y="342.2" width="448" height="0.8" fill="rgba(0,0,0,0.08)"/>
<rect x="107" y="351.2" width="448" height="0.8" fill="rgba(0,0,0,0.08)"/>
<rect x="107" y="360.2" width="448" height="0.8" fill="rgba(0,0,0,0.08)"/>
<rect x="107" y="369.2" width="448" height="0.8" fill="rgba(0,0,0,0.08)"/>
<rect x="107" y="378.2" width="448" height="0.8" fill="rgba(0,0,0,0.08)"/>
<rect x="107" y="387.2" width="448" height="0.8" fill="rgba(0,0,0,0.08)"/>
<rect x="107" y="396.2" width="448" height="0.8" fill="rgba(0,0,0,0.08)"/>
<rect x="107" y="405.2" width="448" height="0.8" fill="rgba(0,0,0,0.08)"/>
<rect x="107" y="414.2" width="448" height="0.8" fill="rgba(0,0,0,0.08)"/>
<rect x="107" y="423.2" width="448" height="0.8" fill="rgba(0,0,0,0.08)"/>
<rect x="107" y="432.2" width="448" height="0.8" fill="rgba(0,0,0,0.08)"/>
<rect x="107" y="441.2" width="448" height="0.8" fill="rgba(0,0,0,0.08)"/>
<rect x="107" y="450.2" width="448" height="0.8" fill="rgba(0,0,0,0.08)"/>
<rect x="107" y="459.2" width="448" height="0.8" fill="rgba(0,0,0,0.08)"/>
<rect x="107" y="468.2" width="448" height="0.8" fill="rgba(0,0,0,0.08)"/>
<rect x="107" y="477.2" width="448" height="0.8" fill="rgba(0,0,0,0.08)"/>
<rect x="107" y="486.2" width="448" height="0.8" fill="rgba(0,0,0,0.08)"/>
<rect x="107" y="495.2" width="448" height="0.8" fill="rgba(0,0,0,0.08)"/>
<rect x="107" y="504.2" width="448" height="0.8" fill="rgba(0,0,0,0.08)"/>
<rect x="107" y="513.2" width="448" height="0.8" fill="rgba(0,0,0,0.08)"/>
<rect x="107" y="522.2" width="448" height="0.8" fill="rgba(0,0,0,0.08)"/>
<rect x="107" y="531.2" width="448" height="0.8" fill="rgba(0,0,0,0.08)"/>
<rect x="107" y="540.2" width="448" height="0.8" fill="rgba(0,0,0,0.08)"/>
<rect x="107" y="549.2" width="448" height="0.8" fill="rgba(0,0,0,0.08)"/>
<rect x="107" y="558.2" width="448" height="0.8" fill="rgba(0,0,0,0.08)"/>
<rect x="107" y="567.2" width="448" height="0.8" fill="rgba(0,0,0,0.08)"/>
<rect x="107" y="576.2" width="448" height="0.8" fill="rgba(0,0,0,0.08)"/>
<rect x="107" y="585.2" width="448" height="0.8" fill="rgba(0,0,0,0.2)"/>
<rect x="107" y="594.2" width="448" height="0.8" fill="rgba(0,0,0,0.2)"/>
<rect x="107" y="603.2" width="448" height="0.8" fill="rgba(0,0,0,0.2)"/>
<rect x="107" y="612.2" width="448" height="0.8" fill="rgba(0,0,0,0.2)"/>
<rect x="107" y="621.2" width="448" height="0.8" fill="rgba(0,0,0,0.2)"/>
<rect x="107" y="630.2" width="448" height="0.8" fill="rgba(0,0,0,0.2)"/>
<rect x="107" y="639.2" width="448" height="0.8" fill="rgba(0,0,0,0.2)"/>
<rect x="107" y="648.2" width="448" height="0.8" fill="rgba(0,0,0,0.2)"/>
<rect x="107" y="657.2" width="448" height="0.8" fill="rgba(0,0,0,0.2)"/>
<rect x="107" y="666.2" width="448" height="0.8" fill="rgba(0,0,0,0.2)"/>
<rect x="107" y="675.2" width="448" height="0.8" fill="rgba(0,0,0,0.2)"/>
<rect x="107" y="684.2" width="448" height="0.8" fill="rgba(0,0,0,0.2)"/>
<rect x="107" y="693.2" width="448" height="0.8" fill="rgba(0,0,0,0.2)"/>
<rect x="107" y="702.2" width="448" height="0.8" fill="rgba(0,0,0,0.2)"/>
<rect x="107" y="711.2" width="448" height="0.8" fill="rgba(0,0,0,0.2)"/>
<rect x="107" y="720.2" width="448" height="0.8" fill="rgba(0,0,0,0.2)"/>
<rect x="107" y="729.2" width="448" height="0.8" fill="rgba(0,0,0,0.2)"/>
<rect x="107" y="738.2" width="448" height="0.8" fill="rgba(0,0,0,0.2)"/>
<rect x="107" y="747.2" width="448" height="0.8" fill="rgba(0,0,0,0.2)"/>
<rect x="107" y="756.2" width="448" height="0.8" fill="rgba(0,0,0,0.2)"/>
<rect x="107" y="765.2" width="448" height="0.8" fill="rgba(0,0,0,0.2)"/>
<rect x="107" y="774.2" width="448" height="0.8" fill="rgba(0,0,0,0.2)"/>
<rect x="107" y="783.2" width="448" height="0.8" fill="rgba(0,0,0,0.2)"/>
<rect x="107" y="792.2" width="448" height="0.8" fill="rgba(0,0,0,0.2)"/>
<rect x="107" y="801.2" width="448" height="0.8" fill="rgba(0,0,0,0.2)"/>
<rect x="107" y="810.2" width="448" height="0.8" fill="rgba(0,0,0,0.2)"/>
<rect x="107" y="819.2" width="448" height="0.8" fill="rgba(0,0,0,0.2)"/>
<rect x="107" y="828.2" width="448" height="0.8" fill="rgba(0,0,0,0.2)"/>
<rect x="107" y="837.2" width="448" height="0.8" fill="rgba(0,0,0,0.2)"/>
<rect x="107" y="846.2" width="448" height="0.8" fill="rgba(0,0,0,0.2)"/>
<rect x="107" y="855.2" width="448" height="0.8" fill="rgba(0,0,0,0.2)"/>
<rect x="107" y="864.2" width="448" height="0.8" fill="rgba(0,0,0,0.2)"/>
<rect x="107" y="873.2" width="448" height="0.8" fill="rgba(0,0,0,0.2)"/>
<rect x="125.9" y="45" width="2.3" height="830" fill="rgba(195,195,195,0.57)"/>
<rect x="145.9" y="45" width="2.3" height="830" fill="rgba(195,195,195,0.57)"/>
<rect x="165.9" y="45" width="2.3" height="830" fill="rgba(195,195,195,0.57)"/>
<rect x="185.9" y="45" width="2.3" height="830" fill="rgba(195,195,195,0.57)"/>
<rect x="205.9" y="45" width="2.3" height="830" fill="rgba(195,195,195,0.57)"/>
<rect x="225.9" y="45" width="2.3" height="830" fill="rgba(195,195,195,0.57)"/>
<rect x="245.9" y="45" width="2.3" height="830" fill="rgba(195,195,195,0.57)"/>
<rect x="265.9" y="45" width="2.3" height="830" fill="rgba(195,195,195,0.57)"/>
<rect x="285.9" y="45" width="2.3" height="830" fill="rgba(195,195,195,0.57)"/>
<rect x="305.9" y="45" width="2.3" height="830" fill="rgba(195,195,195,0.57)"/>
<rect x="325.9" y="45" width="2.3" height="830" fill="rgba(195,195,195,0.57)"/>
<rect x="345.9" y="45" width="2.3" height="830" fill="rgba(195,195,195,0.57)"/>
<rect x="365.9" y="45" width="2.3" height="830" fill="rgba(195,195,195,0.57)"/>
<rect x="385.9" y="45" width="2.3" height="830" fill="rgba(195,195,195,0.57)"/>
<rect x="405.9" y="45" width="2.3" height="830" fill="rgba(195,195,195,0.57)"/>
<rect x="425.9" y="45" width="2.3" height="830" fill="rgba(195,195,195,0.57)"/>
<rect x="445.9" y="45" width="2.3" height="830" fill="rgba(195,195,195,0.57)"/>
<rect x="465.9" y="45" width="2.3" height="830" fill="rgba(195,195,195,0.57)"/>
<rect x="485.9" y="45" width="2.3" height="830" fill="rgba(195,195,195,0.57)"/>
<rect x="505.9" y="45" width="2.3" height="830" fill="rgba(195,195,195,0.57)"/>
<rect x="525.9" y="45" width="2.3" height="830" fill="rgba(195,195,195,0.57)"/>
<rect x="545.9" y="45" width="2.3" height="830" fill="rgba(195,195,195,0.57)"/>
<rect x="107" y="51.9" width="448" height="2.3" fill="rgba(238,238,238,0.62)"/>
<rect x="107" y="60.9" width="448" height="2.3" fill="rgba(238,238,238,0.62)"/>
<rect x="107" y="69.9" width="448" height="2.3" fill="rgba(238,238,238,0.62)"/>
<rect x="107" y="78.9" width="448" height="2.3" fill="rgba(238,238,238,0.62)"/>
<rect x="107" y="87.9" width="448" height="2.3" fill="rgba(238,238,238,0.62)"/>
<rect x="107" y="96.9" width="448" height="2.3" fill="rgba(238,238,238,0.62)"/>
<rect x="107" y="105.9" width="448" height="2.3" fill="rgba(238,238,238,0.62)"/>
<rect x="107" y="114.9" width="448" height="2.3" fill="rgba(238,238,238,0.62)"/>
<rect x="107" y="123.9" width="448" height="2.3" fill="rgba(238,238,238,0.62)"/>
<rect x="107" y="132.9" width="448" height="2.3" fill="rgba(238,238,238,0.62)"/>
<rect x="107" y="141.9" width="448" height="2.3" fill="rgba(238,238,238,0.62)"/>
<rect x="107" y="150.9" width="448" height="2.3" fill="rgba(238,238,238,0.62)"/>
<rect x="107" y="150.9" width="448" height="2.3" fill="rgba(232,220,240,0.38)"/>
<rect x="107" y="159.9" width="448" height="2.3" fill="rgba(238,238,238,0.62)"/>
<rect x="107" y="168.9" width="448" height="2.3" fill="rgba(238,238,238,0.62)"/>
<rect x="107" y="177.9" width="448" height="2.3" fill="rgba(238,238,238,0.62)"/>
<rect x="107" y="186.9" width="448" height="2.3" fill="rgba(238,238,238,0.62)"/>
<rect x="107" y="195.9" width="448" height="2.3" fill="rgba(238,238,238,0.62)"/>
<rect x="107" y="204.9" width="448" height="2.3" fill="rgba(238,238,238,0.62)"/>
<rect x="107" y="213.9" width="448" height="2.3" fill="rgba(238,238,238,0.62)"/>
<rect x="107" y="222.9" width="448" height="2.3" fill="rgba(238,238,238,0.62)"/>
<rect x="107" y="231.9" width="448" height="2.3" fill="rgba(238,238,238,0.62)"/>
<rect x="107" y="240.9" width="448" height="2.3" fill="rgba(238,238,238,0.62)"/>
<rect x="107" y="249.9" width="448" height="2.3" fill="rgba(238,238,238,0.62)"/>
<rect x="107" y="258.9" width="448" height="2.3" fill="rgba(238,238,238,0.62)"/>
<rect x="107" y="258.9" width="448" height="2.3" fill="rgba(232,220,240,0.38)"/>
<rect x="107" y="267.9" width="448" height="2.3" fill="rgba(238,238,238,0.62)"/>
<rect x="107" y="276.9" width="448" height="2.3" fill="rgba(238,238,238,0.62)"/>
<rect x="107" y="285.9" width="448" height="2.3" fill="rgba(238,238,238,0.62)"/>
<rect x="107" y="294.9" width="448" height="2.3" fill="rgba(238,238,238,0.62)"/>
<rect x="107" y="303.9" width="448" height="2.3" fill="rgba(238,238,238,0.62)"/>
<rect x="107" y="312.9" width="448" height="2.3" fill="rgba(238,238,238,0.62)"/>
<rect x="107" y="321.9" width="448" height="2.3" fill="rgba(238,238,238,0.62)"/>
<rect x="107" y="330.9" width="448" height="2.3" fill="rgba(238,238,238,0.62)"/>
<rect x="107" y="339.9" width="448" height="2.3" fill="rgba(238,238,238,0.62)"/>
<rect x="107" y="348.9" width="448" height="2.3" fill="rgba(238,238,238,0.62)"/>
<rect x="107" y="357.9" width="448" height="2.3" fill="rgba(238,238,238,0.62)"/>
<rect x="107" y="366.9" width="448" height="2.3" fill="rgba(238,238,238,0.62)"/>
<rect x="107" y="366.9" width="448" height="2.3" fill="rgba(232,220,240,0.38)"/>
<rect x="107" y="375.9" width="448" height="2.3" fill="rgba(238,238,238,0.62)"/>
<rect x="107" y="384.9" width="448" height="2.3" fill="rgba(238,238,238,0.62)"/>
<rect x="107" y="393.9" width="448" height="2.3" fill="rgba(238,238,238,0.62)"/>
<rect x="107" y="402.9" width="448" height="2.3" fill="rgba(238,238,238,0.62)"/>
<rect x="107" y="411.9" width="448" height="2.3" fill="rgba(238,238,238,0.62)"/>
<rect x="107" y="420.9" width="448" height="2.3" fill="rgba(238,238,238,0.62)"/>
<rect x="107" y="429.9" width="448" height="2.3" fill="rgba(238,238,238,0.62)"/>
<rect x="107" y="438.9" width="448" height="2.3" fill="rgba(238,238,238,0.62)"/>
<rect x="107" y="447.9" width="448" height="2.3" fill="rgba(238,238,238,0.62)"/>
<rect x="107" y="456.9" width="448" height="2.3" fill="rgba(238,238,238,0.62)"/>
<rect x="107" y="465.9" width="448" height="2.3" fill="rgba(238,238,238,0.62)"/>
<rect x="107" y="474.9" width="448" height="2.3" fill="rgba(238,238,238,0.62)"/>
<rect x="107" y="474.9" width="448" height="2.3" fill="rgba(232,220,240,0.38)"/>
<rect x="107" y="483.9" width="448" height="2.3" fill="rgba(238,238,238,0.62)"/>
<rect x="107" y="492.9" width="448" height="2.3" fill="rgba(238,238,238,0.62)"/>
<rect x="107" y="501.9" width="448" height="2.3" fill="rgba(238,238,238,0.62)"/>
<rect x="107" y="510.9" width="448" height="2.3" fill="rgba(238,238,238,0.62)"/>
<rect x="107" y="519.9" width="448" height="2.3" fill="rgba(238,238,238,0.62)"/>
<rect x="107" y="528.9" width="448" height="2.3" fill="rgba(238,238,238,0.62)"/>
<rect x="107" y="537.9" width="448" height="2.3" fill="rgba(238,238,238,0.62)"/>
<rect x="107" y="546.9" width="448" height="2.3" fill="rgba(238,238,238,0.62)"/>
<rect x="107" y="555.9" width="448" height="2.3" fill="rgba(238,238,238,0.62)"/>
<rect x="107" y="564.9" width="448" height="2.3" fill="rgba(238,238,238,0.62)"/>
<rect x="107" y="573.9" width="448" height="2.3" fill="rgba(238,238,238,0.62)"/>
<rect x="107" y="582.9" width="448" height="2.3" fill="rgba(238,238,238,0.62)"/>
<rect x="107" y="582.9" width="448" height="2.3" fill="rgba(232,220,240,0.38)"/>
<rect x="107" y="591.9" width="448" height="2.3" fill="rgba(238,238,238,0.62)"/>
<rect x="107" y="600.9" width="448" height="2.3" fill="rgba(238,238,238,0.62)"/>
<rect x="107" y="609.9" width="448" height="2.3" fill="rgba(238,238,238,0.62)"/>
<rect x="107" y="618.9" width="448" height="2.3" fill="rgba(238,238,238,0.62)"/>
<rect x="107" y="627.9" width="448" height="2.3" fill="rgba(238,238,238,0.62)"/>
<rect x="107" y="636.9" width="448" height="2.3" fill="rgba(238,238,238,0.62)"/>
<rect x="107" y="645.9" width="448" height="2.3" fill="rgba(238,238,238,0.62)"/>
<rect x="107" y="654.9" width="448" height="2.3" fill="rgba(238,238,238,0.62)"/>
<rect x="107" y="663.9" width="448" height="2.3" fill="rgba(238,238,238,0.62)"/>
<rect x="107" y="672.9" width="448" height="2.3" fill="rgba(238,238,238,0.62)"/>
<rect x="107" y="681.9" width="448" height="2.3" fill="rgba(238,238,238,0.62)"/>
<rect x="107" y="690.9" width="448" height="2.3" fill="rgba(238,238,238,0.62)"/>
<rect x="107" y="690.9" width="448" height="2.3" fill="rgba(232,220,240,0.38)"/>
<rect x="107" y="699.9" width="448" height="2.3" fill="rgba(238,238,238,0.62)"/>
<rect x="107" y="708.9" width="448" height="2.3" fill="rgba(238,238,238,0.62)"/>
<rect x="107" y="717.9" width="448" height="2.3" fill="rgba(238,238,238,0.62)"/>
<rect x="107" y="726.9" width="448" height="2.3" fill="rgba(238,238,238,0.62)"/>
<rect x="107" y="735.9" width="448" height="2.3" fill="rgba(238,238,238,0.62)"/>
<rect x="107" y="744.9" width="448" height="2.3" fill="rgba(238,238,238,0.62)"/>
<rect x="107" y="753.9" width="448" height="2.3" fill="rgba(238,238,238,0.62)"/>
<rect x="107" y="762.9" width="448" height="2.3" fill="rgba(238,238,238,0.62)"/>
<rect x="107" y="771.9" width="448" height="2.3" fill="rgba(238,238,238,0.62)"/>
<rect x="107" y="780.9" width="448" height="2.3" fill="rgba(238,238,238,0.62)"/>
<rect x="107" y="789.9" width="448" height="2.3" fill="rgba(238,238,238,0.62)"/>
<rect x="107" y="798.9" width="448" height="2.3" fill="rgba(238,238,238,0.62)"/>
<rect x="107" y="798.9" width="448" height="2.3" fill="rgba(232,220,240,0.38)"/>
<rect x="107" y="807.9" width="448" height="2.3" fill="rgba(238,238,238,0.62)"/>
<rect x="107" y="816.9" width="448" height="2.3" fill="rgba(238,238,238,0.62)"/>
<rect x="107" y="825.9" width="448" height="2.3" fill="rgba(238,238,238,0.62)"/>
<rect x="107" y="834.9" width="448" height="2.3" fill="rgba(238,238,238,0.62)"/>
<rect x="107" y="843.9" width="448" height="2.3" fill="rgba(238,238,238,0.62)"/>
<rect x="107" y="852.9" width="448" height="2.3" fill="rgba(238,238,238,0.62)"/>
<rect x="107" y="861.9" width="448" height="2.3" fill="rgba(238,238,238,0.62)"/>
<rect x="107" y="870.9" width="448" height="2.3" fill="rgba(238,238,238,0.62)"/>
</g>
<path d="M168.6 81.7H172.0M170.3 80.0V83.4" stroke="#fff" stroke-opacity="0.21" stroke-width="0.9" fill="none"/><rect x="169.7" y="81.1" width="1.2" height="1.2" fill="#fff" fill-opacity="0.35"/>
<path d="M241.6 80.2H245.0M243.3 78.5V81.9" stroke="#fff" stroke-opacity="0.21" stroke-width="0.9" fill="none"/><rect x="242.7" y="79.6" width="1.2" height="1.2" fill="#fff" fill-opacity="0.35"/>
<path d="M254.6 80.2H258.0M256.3 78.5V81.9" stroke="#fff" stroke-opacity="0.21" stroke-width="0.9" fill="none"/><rect x="255.7" y="79.6" width="1.2" height="1.2" fill="#fff" fill-opacity="0.35"/>
<path d="M318.8 80.2H322.2M320.5 78.5V81.9" stroke="#fff" stroke-opacity="0.42" stroke-width="0.9" fill="none"/><rect x="319.9" y="79.6" width="1.2" height="1.2" fill="#fff" fill-opacity="0.7"/>
<path d="M262.5 95.1H265.9M264.2 93.4V96.8" stroke="#000" stroke-opacity="0.48" stroke-width="0.9" fill="none"/><rect x="263.6" y="94.5" width="1.2" height="1.2" fill="#000" fill-opacity="0.8"/>
<path d="M287.8 94.2H291.2M289.5 92.5V95.9" stroke="#fff" stroke-opacity="0.21" stroke-width="0.9" fill="none"/><rect x="288.9" y="93.6" width="1.2" height="1.2" fill="#fff" fill-opacity="0.35"/>
<path d="M291.7 94.5H295.1M293.4 92.8V96.2" stroke="#fff" stroke-opacity="0.57" stroke-width="0.9" fill="none"/><rect x="292.8" y="93.9" width="1.2" height="1.2" fill="#fff" fill-opacity="0.95"/>
<path d="M300.6 94.5H304.0M302.3 92.8V96.2" stroke="#fff" stroke-opacity="0.42" stroke-width="0.9" fill="none"/><rect x="301.7" y="93.9" width="1.2" height="1.2" fill="#fff" fill-opacity="0.7"/>
<path d="M347.7 93.0H351.1M349.4 91.3V94.7" stroke="#fff" stroke-opacity="0.42" stroke-width="0.9" fill="none"/><rect x="348.8" y="92.4" width="1.2" height="1.2" fill="#fff" fill-opacity="0.7"/>
<path d="M400.6 93.0H404.0M402.3 91.3V94.7" stroke="#fff" stroke-opacity="0.21" stroke-width="0.9" fill="none"/><rect x="401.7" y="92.4" width="1.2" height="1.2" fill="#fff" fill-opacity="0.35"/>
<path d="M119.6 109.4H123.0M121.3 107.7V111.1" stroke="#fff" stroke-opacity="0.42" stroke-width="0.9" fill="none"/><rect x="120.7" y="108.8" width="1.2" height="1.2" fill="#fff" fill-opacity="0.7"/>
<path d="M236.7 109.4H240.1M238.4 107.7V111.1" stroke="#fff" stroke-opacity="0.42" stroke-width="0.9" fill="none"/><rect x="237.8" y="108.8" width="1.2" height="1.2" fill="#fff" fill-opacity="0.7"/>
<path d="M271.7 107.3H275.1M273.4 105.6V109.0" stroke="#fff" stroke-opacity="0.21" stroke-width="0.9" fill="none"/><rect x="272.8" y="106.7" width="1.2" height="1.2" fill="#fff" fill-opacity="0.35"/>
<path d="M342.8 110.3H346.2M344.5 108.6V112.0" stroke="#fff" stroke-opacity="0.57" stroke-width="0.9" fill="none"/><rect x="343.9" y="109.7" width="1.2" height="1.2" fill="#fff" fill-opacity="0.95"/>
<path d="M372.6 110.3H376.0M374.3 108.6V112.0" stroke="#fff" stroke-opacity="0.42" stroke-width="0.9" fill="none"/><rect x="373.7" y="109.7" width="1.2" height="1.2" fill="#fff" fill-opacity="0.7"/>
<path d="M448.7 107.3H452.1M450.4 105.6V109.0" stroke="#fff" stroke-opacity="0.21" stroke-width="0.9" fill="none"/><rect x="449.8" y="106.7" width="1.2" height="1.2" fill="#fff" fill-opacity="0.35"/>
<path d="M471.5 110.3H474.9M473.2 108.6V112.0" stroke="#fff" stroke-opacity="0.42" stroke-width="0.9" fill="none"/><rect x="472.6" y="109.7" width="1.2" height="1.2" fill="#fff" fill-opacity="0.7"/>
<path d="M488.8 109.4H492.2M490.5 107.7V111.1" stroke="#fff" stroke-opacity="0.21" stroke-width="0.9" fill="none"/><rect x="489.9" y="108.8" width="1.2" height="1.2" fill="#fff" fill-opacity="0.35"/>
<path d="M510.7 109.4H514.1M512.4 107.7V111.1" stroke="#fff" stroke-opacity="0.42" stroke-width="0.9" fill="none"/><rect x="511.8" y="108.8" width="1.2" height="1.2" fill="#fff" fill-opacity="0.7"/>
<path d="M176.8 124.3H180.2M178.5 122.6V126.0" stroke="#fff" stroke-opacity="0.57" stroke-width="0.9" fill="none"/><rect x="177.9" y="123.7" width="1.2" height="1.2" fill="#fff" fill-opacity="0.95"/>
<path d="M234.9 122.5H238.3M236.6 120.8V124.2" stroke="#fff" stroke-opacity="0.57" stroke-width="0.9" fill="none"/><rect x="236.0" y="121.9" width="1.2" height="1.2" fill="#fff" fill-opacity="0.95"/>
<path d="M342.8 123.4H346.2M344.5 121.7V125.1" stroke="#fff" stroke-opacity="0.42" stroke-width="0.9" fill="none"/><rect x="343.9" y="122.8" width="1.2" height="1.2" fill="#fff" fill-opacity="0.7"/>
<path d="M397.0 123.4H400.4M398.7 121.7V125.1" stroke="#fff" stroke-opacity="0.42" stroke-width="0.9" fill="none"/><rect x="398.1" y="122.8" width="1.2" height="1.2" fill="#fff" fill-opacity="0.7"/>
<path d="M453.5 123.4H456.9M455.2 121.7V125.1" stroke="#fff" stroke-opacity="0.42" stroke-width="0.9" fill="none"/><rect x="454.6" y="122.8" width="1.2" height="1.2" fill="#fff" fill-opacity="0.7"/>
<path d="M508.6 122.5H512.0M510.3 120.8V124.2" stroke="#fff" stroke-opacity="0.42" stroke-width="0.9" fill="none"/><rect x="509.7" y="121.9" width="1.2" height="1.2" fill="#fff" fill-opacity="0.7"/>
<path d="M523.8 123.4H527.2M525.5 121.7V125.1" stroke="#fff" stroke-opacity="0.21" stroke-width="0.9" fill="none"/><rect x="524.9" y="122.8" width="1.2" height="1.2" fill="#fff" fill-opacity="0.35"/>
<path d="M118.7 139.2H122.1M120.4 137.5V140.9" stroke="#fff" stroke-opacity="0.42" stroke-width="0.9" fill="none"/><rect x="119.8" y="138.6" width="1.2" height="1.2" fill="#fff" fill-opacity="0.7"/>
<path d="M144.8 138.3H148.2M146.5 136.6V140.0" stroke="#fff" stroke-opacity="0.21" stroke-width="0.9" fill="none"/><rect x="145.9" y="137.7" width="1.2" height="1.2" fill="#fff" fill-opacity="0.35"/>
<path d="M147.3 138.3H150.7M149.0 136.6V140.0" stroke="#fff" stroke-opacity="0.21" stroke-width="0.9" fill="none"/><rect x="148.4" y="137.7" width="1.2" height="1.2" fill="#fff" fill-opacity="0.35"/>
<path d="M180.7 137.4H184.1M182.4 135.7V139.1" stroke="#000" stroke-opacity="0.48" stroke-width="0.9" fill="none"/><rect x="181.8" y="136.8" width="1.2" height="1.2" fill="#000" fill-opacity="0.8"/>
<path d="M418.9 139.2H422.3M420.6 137.5V140.9" stroke="#fff" stroke-opacity="0.57" stroke-width="0.9" fill="none"/><rect x="420.0" y="138.6" width="1.2" height="1.2" fill="#fff" fill-opacity="0.95"/>
<path d="M277.1 186.4H280.5M278.8 184.7V188.1" stroke="#fff" stroke-opacity="0.42" stroke-width="0.9" fill="none"/><rect x="278.2" y="185.8" width="1.2" height="1.2" fill="#fff" fill-opacity="0.7"/>
<path d="M230.6 202.9H234.0M232.3 201.2V204.6" stroke="#fff" stroke-opacity="0.21" stroke-width="0.9" fill="none"/><rect x="231.7" y="202.3" width="1.2" height="1.2" fill="#fff" fill-opacity="0.35"/>
<path d="M314.8 202.9H318.2M316.5 201.2V204.6" stroke="#fff" stroke-opacity="0.42" stroke-width="0.9" fill="none"/><rect x="315.9" y="202.3" width="1.2" height="1.2" fill="#fff" fill-opacity="0.7"/>
<path d="M274.1 245.4H277.5M275.8 243.7V247.1" stroke="#fff" stroke-opacity="0.57" stroke-width="0.9" fill="none"/><rect x="275.2" y="244.8" width="1.2" height="1.2" fill="#fff" fill-opacity="0.95"/>
<path d="M272.0 246.3H275.4M273.7 244.6V248.0" stroke="#fff" stroke-opacity="0.42" stroke-width="0.9" fill="none"/><rect x="273.1" y="245.7" width="1.2" height="1.2" fill="#fff" fill-opacity="0.7"/>
<path d="M139.7 285.3H143.1M141.4 283.6V287.0" stroke="#fff" stroke-opacity="0.21" stroke-width="0.9" fill="none"/><rect x="140.8" y="284.7" width="1.2" height="1.2" fill="#fff" fill-opacity="0.35"/>
<path d="M216.9 285.3H220.3M218.6 283.6V287.0" stroke="#fff" stroke-opacity="0.42" stroke-width="0.9" fill="none"/><rect x="218.0" y="284.7" width="1.2" height="1.2" fill="#fff" fill-opacity="0.7"/>
<path d="M275.6 285.3H279.0M277.3 283.6V287.0" stroke="#fff" stroke-opacity="0.21" stroke-width="0.9" fill="none"/><rect x="276.7" y="284.7" width="1.2" height="1.2" fill="#fff" fill-opacity="0.35"/>
<path d="M296.0 285.3H299.4M297.7 283.6V287.0" stroke="#fff" stroke-opacity="0.21" stroke-width="0.9" fill="none"/><rect x="297.1" y="284.7" width="1.2" height="1.2" fill="#fff" fill-opacity="0.35"/>
<path d="M199.6 299.6H203.0M201.3 297.9V301.3" stroke="#fff" stroke-opacity="0.21" stroke-width="0.9" fill="none"/><rect x="200.7" y="299.0" width="1.2" height="1.2" fill="#fff" fill-opacity="0.35"/>
<path d="M212.7 299.6H216.1M214.4 297.9V301.3" stroke="#fff" stroke-opacity="0.21" stroke-width="0.9" fill="none"/><rect x="213.8" y="299.0" width="1.2" height="1.2" fill="#fff" fill-opacity="0.35"/>
<path d="M111.4 300.2H114.8M113.1 298.5V301.9" stroke="#fff" stroke-opacity="0.42" stroke-width="0.9" fill="none"/><rect x="112.5" y="299.6" width="1.2" height="1.2" fill="#fff" fill-opacity="0.7"/>
<path d="M512.2 299.0H515.6M513.9 297.3V300.7" stroke="#fff" stroke-opacity="0.42" stroke-width="0.9" fill="none"/><rect x="513.3" y="298.4" width="1.2" height="1.2" fill="#fff" fill-opacity="0.7"/>
<path d="M536.6 273.1H540.0M538.3 271.4V274.8" stroke="#000" stroke-opacity="0.48" stroke-width="0.9" fill="none"/><rect x="537.7" y="272.5" width="1.2" height="1.2" fill="#000" fill-opacity="0.8"/>
<path d="M472.7 217.5H476.1M474.4 215.8V219.2" stroke="#fff" stroke-opacity="0.21" stroke-width="0.9" fill="none"/><rect x="473.8" y="216.9" width="1.2" height="1.2" fill="#fff" fill-opacity="0.35"/>
<path d="M163.4 328.3H166.8M165.1 326.6V330.0" stroke="#fff" stroke-opacity="0.42" stroke-width="0.9" fill="none"/><rect x="164.5" y="327.7" width="1.2" height="1.2" fill="#fff" fill-opacity="0.7"/>
<path d="M316.7 329.2H320.1M318.4 327.5V330.9" stroke="#fff" stroke-opacity="0.57" stroke-width="0.9" fill="none"/><rect x="317.8" y="328.6" width="1.2" height="1.2" fill="#fff" fill-opacity="0.95"/>
<path d="M348.6 329.2H352.0M350.3 327.5V330.9" stroke="#fff" stroke-opacity="0.57" stroke-width="0.9" fill="none"/><rect x="349.7" y="328.6" width="1.2" height="1.2" fill="#fff" fill-opacity="0.95"/>
<path d="M112.0 343.5H115.4M113.7 341.8V345.2" stroke="#fff" stroke-opacity="0.42" stroke-width="0.9" fill="none"/><rect x="113.1" y="342.9" width="1.2" height="1.2" fill="#fff" fill-opacity="0.7"/>
<path d="M216.6 343.5H220.0M218.3 341.8V345.2" stroke="#fff" stroke-opacity="0.21" stroke-width="0.9" fill="none"/><rect x="217.7" y="342.9" width="1.2" height="1.2" fill="#fff" fill-opacity="0.35"/>
<path d="M310.6 345.3H314.0M312.3 343.6V347.0" stroke="#fff" stroke-opacity="0.42" stroke-width="0.9" fill="none"/><rect x="311.7" y="344.7" width="1.2" height="1.2" fill="#fff" fill-opacity="0.7"/>
<path d="M345.6 345.3H349.0M347.3 343.6V347.0" stroke="#fff" stroke-opacity="0.21" stroke-width="0.9" fill="none"/><rect x="346.7" y="344.7" width="1.2" height="1.2" fill="#fff" fill-opacity="0.35"/>
<path d="M512.8 344.4H516.2M514.5 342.7V346.1" stroke="#fff" stroke-opacity="0.42" stroke-width="0.9" fill="none"/><rect x="513.9" y="343.8" width="1.2" height="1.2" fill="#fff" fill-opacity="0.7"/>
<path d="M154.9 358.1H158.3M156.6 356.4V359.8" stroke="#fff" stroke-opacity="0.42" stroke-width="0.9" fill="none"/><rect x="156.0" y="357.5" width="1.2" height="1.2" fill="#fff" fill-opacity="0.7"/>
<path d="M338.9 407.0H342.3M340.6 405.3V408.7" stroke="#fff" stroke-opacity="0.21" stroke-width="0.9" fill="none"/><rect x="340.0" y="406.4" width="1.2" height="1.2" fill="#fff" fill-opacity="0.35"/>
<path d="M415.5 409.2H418.9M417.2 407.5V410.9" stroke="#fff" stroke-opacity="0.42" stroke-width="0.9" fill="none"/><rect x="416.6" y="408.6" width="1.2" height="1.2" fill="#fff" fill-opacity="0.7"/>
<path d="M421.6 409.2H425.0M423.3 407.5V410.9" stroke="#fff" stroke-opacity="0.21" stroke-width="0.9" fill="none"/><rect x="422.7" y="408.6" width="1.2" height="1.2" fill="#fff" fill-opacity="0.35"/>
<path d="M491.6 409.2H495.0M493.3 407.5V410.9" stroke="#fff" stroke-opacity="0.21" stroke-width="0.9" fill="none"/><rect x="492.7" y="408.6" width="1.2" height="1.2" fill="#fff" fill-opacity="0.35"/>
<path d="M494.9 407.3H498.3M496.6 405.6V409.0" stroke="#fff" stroke-opacity="0.42" stroke-width="0.9" fill="none"/><rect x="496.0" y="406.7" width="1.2" height="1.2" fill="#fff" fill-opacity="0.7"/>
<path d="M312.7 438.4H316.1M314.4 436.7V440.1" stroke="#fff" stroke-opacity="0.42" stroke-width="0.9" fill="none"/><rect x="313.8" y="437.8" width="1.2" height="1.2" fill="#fff" fill-opacity="0.7"/>
<path d="M240.6 423.1H244.0M242.3 421.4V424.8" stroke="#fff" stroke-opacity="0.21" stroke-width="0.9" fill="none"/><rect x="241.7" y="422.5" width="1.2" height="1.2" fill="#fff" fill-opacity="0.35"/>
<path d="M143.6 613.5H147.0M145.3 611.8V615.2" stroke="#fff" stroke-opacity="0.21" stroke-width="0.9" fill="none"/><rect x="144.7" y="612.9" width="1.2" height="1.2" fill="#fff" fill-opacity="0.35"/>
<path d="M269.8 613.5H273.2M271.5 611.8V615.2" stroke="#fff" stroke-opacity="0.21" stroke-width="0.9" fill="none"/><rect x="270.9" y="612.9" width="1.2" height="1.2" fill="#fff" fill-opacity="0.35"/>
<path d="M528.7 613.5H532.1M530.4 611.8V615.2" stroke="#fff" stroke-opacity="0.57" stroke-width="0.9" fill="none"/><rect x="529.8" y="612.9" width="1.2" height="1.2" fill="#fff" fill-opacity="0.95"/>
<path d="M136.9 630.5H140.3M138.6 628.8V632.2" stroke="#fff" stroke-opacity="0.21" stroke-width="0.9" fill="none"/><rect x="138.0" y="629.9" width="1.2" height="1.2" fill="#fff" fill-opacity="0.35"/>
<path d="M155.8 630.5H159.2M157.5 628.8V632.2" stroke="#fff" stroke-opacity="0.21" stroke-width="0.9" fill="none"/><rect x="156.9" y="629.9" width="1.2" height="1.2" fill="#fff" fill-opacity="0.35"/>
<path d="M247.3 630.5H250.7M249.0 628.8V632.2" stroke="#fff" stroke-opacity="0.21" stroke-width="0.9" fill="none"/><rect x="248.4" y="629.9" width="1.2" height="1.2" fill="#fff" fill-opacity="0.35"/>
<path d="M281.7 627.2H285.1M283.4 625.5V628.9" stroke="#fff" stroke-opacity="0.42" stroke-width="0.9" fill="none"/><rect x="282.8" y="626.6" width="1.2" height="1.2" fill="#fff" fill-opacity="0.7"/>
<path d="M318.8 627.2H322.2M320.5 625.5V628.9" stroke="#000" stroke-opacity="0.48" stroke-width="0.9" fill="none"/><rect x="319.9" y="626.6" width="1.2" height="1.2" fill="#000" fill-opacity="0.8"/>
<path d="M376.9 627.2H380.3M378.6 625.5V628.9" stroke="#fff" stroke-opacity="0.42" stroke-width="0.9" fill="none"/><rect x="378.0" y="626.6" width="1.2" height="1.2" fill="#fff" fill-opacity="0.7"/>
<path d="M418.9 628.1H422.3M420.6 626.4V629.8" stroke="#fff" stroke-opacity="0.21" stroke-width="0.9" fill="none"/><rect x="420.0" y="627.5" width="1.2" height="1.2" fill="#fff" fill-opacity="0.35"/>
<path d="M198.7 642.1H202.1M200.4 640.4V643.8" stroke="#fff" stroke-opacity="0.57" stroke-width="0.9" fill="none"/><rect x="199.8" y="641.5" width="1.2" height="1.2" fill="#fff" fill-opacity="0.95"/>
<path d="M239.7 643.3H243.1M241.4 641.6V645.0" stroke="#fff" stroke-opacity="0.57" stroke-width="0.9" fill="none"/><rect x="240.8" y="642.7" width="1.2" height="1.2" fill="#fff" fill-opacity="0.95"/>
<path d="M333.7 642.1H337.1M335.4 640.4V643.8" stroke="#fff" stroke-opacity="0.21" stroke-width="0.9" fill="none"/><rect x="334.8" y="641.5" width="1.2" height="1.2" fill="#fff" fill-opacity="0.35"/>
<path d="M353.8 642.1H357.2M355.5 640.4V643.8" stroke="#fff" stroke-opacity="0.42" stroke-width="0.9" fill="none"/><rect x="354.9" y="641.5" width="1.2" height="1.2" fill="#fff" fill-opacity="0.7"/>
<path d="M421.0 642.1H424.4M422.7 640.4V643.8" stroke="#fff" stroke-opacity="0.21" stroke-width="0.9" fill="none"/><rect x="422.1" y="641.5" width="1.2" height="1.2" fill="#fff" fill-opacity="0.35"/>
<path d="M458.7 642.1H462.1M460.4 640.4V643.8" stroke="#fff" stroke-opacity="0.57" stroke-width="0.9" fill="none"/><rect x="459.8" y="641.5" width="1.2" height="1.2" fill="#fff" fill-opacity="0.95"/>
<path d="M516.8 644.2H520.2M518.5 642.5V645.9" stroke="#fff" stroke-opacity="0.42" stroke-width="0.9" fill="none"/><rect x="517.9" y="643.6" width="1.2" height="1.2" fill="#fff" fill-opacity="0.7"/>
<path d="M527.7 643.3H531.1M529.4 641.6V645.0" stroke="#fff" stroke-opacity="0.42" stroke-width="0.9" fill="none"/><rect x="528.8" y="642.7" width="1.2" height="1.2" fill="#fff" fill-opacity="0.7"/>
<path d="M190.8 658.2H194.2M192.5 656.5V659.9" stroke="#fff" stroke-opacity="0.42" stroke-width="0.9" fill="none"/><rect x="191.9" y="657.6" width="1.2" height="1.2" fill="#fff" fill-opacity="0.7"/>
<path d="M227.9 658.2H231.3M229.6 656.5V659.9" stroke="#fff" stroke-opacity="0.42" stroke-width="0.9" fill="none"/><rect x="229.0" y="657.6" width="1.2" height="1.2" fill="#fff" fill-opacity="0.7"/>
<path d="M256.8 657.6H260.2M258.5 655.9V659.3" stroke="#000" stroke-opacity="0.48" stroke-width="0.9" fill="none"/><rect x="257.9" y="657.0" width="1.2" height="1.2" fill="#000" fill-opacity="0.8"/>
<path d="M260.7 658.2H264.1M262.4 656.5V659.9" stroke="#fff" stroke-opacity="0.42" stroke-width="0.9" fill="none"/><rect x="261.8" y="657.6" width="1.2" height="1.2" fill="#fff" fill-opacity="0.7"/>
<path d="M293.6 659.1H297.0M295.3 657.4V660.8" stroke="#fff" stroke-opacity="0.57" stroke-width="0.9" fill="none"/><rect x="294.7" y="658.5" width="1.2" height="1.2" fill="#fff" fill-opacity="0.95"/>
<path d="M330.7 659.1H334.1M332.4 657.4V660.8" stroke="#fff" stroke-opacity="0.57" stroke-width="0.9" fill="none"/><rect x="331.8" y="658.5" width="1.2" height="1.2" fill="#fff" fill-opacity="0.95"/>
<path d="M364.4 659.1H367.8M366.1 657.4V660.8" stroke="#fff" stroke-opacity="0.21" stroke-width="0.9" fill="none"/><rect x="365.5" y="658.5" width="1.2" height="1.2" fill="#fff" fill-opacity="0.35"/>
<path d="M398.8 659.1H402.2M400.5 657.4V660.8" stroke="#fff" stroke-opacity="0.21" stroke-width="0.9" fill="none"/><rect x="399.9" y="658.5" width="1.2" height="1.2" fill="#fff" fill-opacity="0.35"/>
<path d="M114.7 672.5H118.1M116.4 670.8V674.2" stroke="#fff" stroke-opacity="0.42" stroke-width="0.9" fill="none"/><rect x="115.8" y="671.9" width="1.2" height="1.2" fill="#fff" fill-opacity="0.7"/>
<path d="M163.7 673.1H167.1M165.4 671.4V674.8" stroke="#fff" stroke-opacity="0.42" stroke-width="0.9" fill="none"/><rect x="164.8" y="672.5" width="1.2" height="1.2" fill="#fff" fill-opacity="0.7"/>
<path d="M240.6 671.3H244.0M242.3 669.6V673.0" stroke="#fff" stroke-opacity="0.21" stroke-width="0.9" fill="none"/><rect x="241.7" y="670.7" width="1.2" height="1.2" fill="#fff" fill-opacity="0.35"/>
<path d="M383.9 673.1H387.3M385.6 671.4V674.8" stroke="#fff" stroke-opacity="0.21" stroke-width="0.9" fill="none"/><rect x="385.0" y="672.5" width="1.2" height="1.2" fill="#fff" fill-opacity="0.35"/>
<path d="M461.7 673.1H465.1M463.4 671.4V674.8" stroke="#fff" stroke-opacity="0.42" stroke-width="0.9" fill="none"/><rect x="462.8" y="672.5" width="1.2" height="1.2" fill="#fff" fill-opacity="0.7"/>
<path d="M106.8 686.2H110.2M108.5 684.5V687.9" stroke="#fff" stroke-opacity="0.42" stroke-width="0.9" fill="none"/><rect x="107.9" y="685.6" width="1.2" height="1.2" fill="#fff" fill-opacity="0.7"/>
<path d="M134.5 688.3H137.9M136.2 686.6V690.0" stroke="#fff" stroke-opacity="0.42" stroke-width="0.9" fill="none"/><rect x="135.6" y="687.7" width="1.2" height="1.2" fill="#fff" fill-opacity="0.7"/>
<path d="M137.8 687.4H141.2M139.5 685.7V689.1" stroke="#fff" stroke-opacity="0.42" stroke-width="0.9" fill="none"/><rect x="138.9" y="686.8" width="1.2" height="1.2" fill="#fff" fill-opacity="0.7"/>
<path d="M178.6 685.3H182.0M180.3 683.6V687.0" stroke="#fff" stroke-opacity="0.21" stroke-width="0.9" fill="none"/><rect x="179.7" y="684.7" width="1.2" height="1.2" fill="#fff" fill-opacity="0.35"/>
<path d="M189.5 685.3H192.9M191.2 683.6V687.0" stroke="#fff" stroke-opacity="0.42" stroke-width="0.9" fill="none"/><rect x="190.6" y="684.7" width="1.2" height="1.2" fill="#fff" fill-opacity="0.7"/>
<path d="M397.6 687.4H401.0M399.3 685.7V689.1" stroke="#fff" stroke-opacity="0.57" stroke-width="0.9" fill="none"/><rect x="398.7" y="686.8" width="1.2" height="1.2" fill="#fff" fill-opacity="0.95"/>
<path d="M201.7 713.3H205.1M203.4 711.6V715.0" stroke="#fff" stroke-opacity="0.42" stroke-width="0.9" fill="none"/><rect x="202.8" y="712.7" width="1.2" height="1.2" fill="#fff" fill-opacity="0.7"/>
<path d="M216.6 713.3H220.0M218.3 711.6V715.0" stroke="#fff" stroke-opacity="0.57" stroke-width="0.9" fill="none"/><rect x="217.7" y="712.7" width="1.2" height="1.2" fill="#fff" fill-opacity="0.95"/>
<path d="M300.6 714.2H304.0M302.3 712.5V715.9" stroke="#fff" stroke-opacity="0.57" stroke-width="0.9" fill="none"/><rect x="301.7" y="713.6" width="1.2" height="1.2" fill="#fff" fill-opacity="0.95"/>
<path d="M317.6 714.2H321.0M319.3 712.5V715.9" stroke="#fff" stroke-opacity="0.42" stroke-width="0.9" fill="none"/><rect x="318.7" y="713.6" width="1.2" height="1.2" fill="#fff" fill-opacity="0.7"/>
<path d="M421.0 714.2H424.4M422.7 712.5V715.9" stroke="#fff" stroke-opacity="0.21" stroke-width="0.9" fill="none"/><rect x="422.1" y="713.6" width="1.2" height="1.2" fill="#fff" fill-opacity="0.35"/>
<path d="M200.8 729.2H204.2M202.5 727.5V730.9" stroke="#fff" stroke-opacity="0.21" stroke-width="0.9" fill="none"/><rect x="201.9" y="728.6" width="1.2" height="1.2" fill="#fff" fill-opacity="0.35"/>
<path d="M300.6 727.3H304.0M302.3 725.6V729.0" stroke="#fff" stroke-opacity="0.42" stroke-width="0.9" fill="none"/><rect x="301.7" y="726.7" width="1.2" height="1.2" fill="#fff" fill-opacity="0.7"/>
<path d="M320.0 728.3H323.4M321.7 726.6V730.0" stroke="#fff" stroke-opacity="0.21" stroke-width="0.9" fill="none"/><rect x="321.1" y="727.7" width="1.2" height="1.2" fill="#fff" fill-opacity="0.35"/>
<path d="M330.7 727.3H334.1M332.4 725.6V729.0" stroke="#fff" stroke-opacity="0.57" stroke-width="0.9" fill="none"/><rect x="331.8" y="726.7" width="1.2" height="1.2" fill="#fff" fill-opacity="0.95"/>
<path d="M108.6 742.6H112.0M110.3 740.9V744.3" stroke="#fff" stroke-opacity="0.42" stroke-width="0.9" fill="none"/><rect x="109.7" y="742.0" width="1.2" height="1.2" fill="#fff" fill-opacity="0.7"/>
<path d="M117.8 742.6H121.2M119.5 740.9V744.3" stroke="#fff" stroke-opacity="0.57" stroke-width="0.9" fill="none"/><rect x="118.9" y="742.0" width="1.2" height="1.2" fill="#fff" fill-opacity="0.95"/>
<path d="M149.7 741.6H153.1M151.4 739.9V743.3" stroke="#fff" stroke-opacity="0.57" stroke-width="0.9" fill="none"/><rect x="150.8" y="741.0" width="1.2" height="1.2" fill="#fff" fill-opacity="0.95"/>
<path d="M184.4 743.5H187.8M186.1 741.8V745.2" stroke="#fff" stroke-opacity="0.21" stroke-width="0.9" fill="none"/><rect x="185.5" y="742.9" width="1.2" height="1.2" fill="#fff" fill-opacity="0.35"/>
<path d="M192.0 743.5H195.4M193.7 741.8V745.2" stroke="#fff" stroke-opacity="0.21" stroke-width="0.9" fill="none"/><rect x="193.1" y="742.9" width="1.2" height="1.2" fill="#fff" fill-opacity="0.35"/>
<path d="M244.6 743.5H248.0M246.3 741.8V745.2" stroke="#fff" stroke-opacity="0.42" stroke-width="0.9" fill="none"/><rect x="245.7" y="742.9" width="1.2" height="1.2" fill="#fff" fill-opacity="0.7"/>
<path d="M251.6 743.5H255.0M253.3 741.8V745.2" stroke="#fff" stroke-opacity="0.21" stroke-width="0.9" fill="none"/><rect x="252.7" y="742.9" width="1.2" height="1.2" fill="#fff" fill-opacity="0.35"/>
<path d="M258.9 741.6H262.3M260.6 739.9V743.3" stroke="#fff" stroke-opacity="0.21" stroke-width="0.9" fill="none"/><rect x="260.0" y="741.0" width="1.2" height="1.2" fill="#fff" fill-opacity="0.35"/>
<path d="M300.6 741.6H304.0M302.3 739.9V743.3" stroke="#fff" stroke-opacity="0.42" stroke-width="0.9" fill="none"/><rect x="301.7" y="741.0" width="1.2" height="1.2" fill="#fff" fill-opacity="0.7"/>
<path d="M301.8 743.5H305.2M303.5 741.8V745.2" stroke="#fff" stroke-opacity="0.42" stroke-width="0.9" fill="none"/><rect x="302.9" y="742.9" width="1.2" height="1.2" fill="#fff" fill-opacity="0.7"/>
<path d="M369.6 742.6H373.0M371.3 740.9V744.3" stroke="#fff" stroke-opacity="0.57" stroke-width="0.9" fill="none"/><rect x="370.7" y="742.0" width="1.2" height="1.2" fill="#fff" fill-opacity="0.95"/>
<path d="M468.7 740.7H472.1M470.4 739.0V742.4" stroke="#fff" stroke-opacity="0.21" stroke-width="0.9" fill="none"/><rect x="469.8" y="740.1" width="1.2" height="1.2" fill="#fff" fill-opacity="0.35"/>
<path d="M499.8 740.7H503.2M501.5 739.0V742.4" stroke="#fff" stroke-opacity="0.42" stroke-width="0.9" fill="none"/><rect x="500.9" y="740.1" width="1.2" height="1.2" fill="#fff" fill-opacity="0.7"/>
<path d="M144.2 758.4H147.6M145.9 756.7V760.1" stroke="#fff" stroke-opacity="0.21" stroke-width="0.9" fill="none"/><rect x="145.3" y="757.8" width="1.2" height="1.2" fill="#fff" fill-opacity="0.35"/>
<path d="M206.6 758.4H210.0M208.3 756.7V760.1" stroke="#fff" stroke-opacity="0.21" stroke-width="0.9" fill="none"/><rect x="207.7" y="757.8" width="1.2" height="1.2" fill="#fff" fill-opacity="0.35"/>
<path d="M282.6 755.9H286.0M284.3 754.2V757.6" stroke="#fff" stroke-opacity="0.21" stroke-width="0.9" fill="none"/><rect x="283.7" y="755.3" width="1.2" height="1.2" fill="#fff" fill-opacity="0.35"/>
<path d="M351.7 757.5H355.1M353.4 755.8V759.2" stroke="#fff" stroke-opacity="0.42" stroke-width="0.9" fill="none"/><rect x="352.8" y="756.9" width="1.2" height="1.2" fill="#fff" fill-opacity="0.7"/>
<path d="M354.1 755.3H357.5M355.8 753.6V757.0" stroke="#fff" stroke-opacity="0.21" stroke-width="0.9" fill="none"/><rect x="355.2" y="754.7" width="1.2" height="1.2" fill="#fff" fill-opacity="0.35"/>
<path d="M367.8 758.4H371.2M369.5 756.7V760.1" stroke="#fff" stroke-opacity="0.21" stroke-width="0.9" fill="none"/><rect x="368.9" y="757.8" width="1.2" height="1.2" fill="#fff" fill-opacity="0.35"/>
<path d="M477.6 758.4H481.0M479.3 756.7V760.1" stroke="#fff" stroke-opacity="0.21" stroke-width="0.9" fill="none"/><rect x="478.7" y="757.8" width="1.2" height="1.2" fill="#fff" fill-opacity="0.35"/>
<path d="M531.7 758.4H535.1M533.4 756.7V760.1" stroke="#fff" stroke-opacity="0.21" stroke-width="0.9" fill="none"/><rect x="532.8" y="757.8" width="1.2" height="1.2" fill="#fff" fill-opacity="0.35"/>
<path d="M150.6 771.4H154.0M152.3 769.7V773.1" stroke="#fff" stroke-opacity="0.21" stroke-width="0.9" fill="none"/><rect x="151.7" y="770.8" width="1.2" height="1.2" fill="#fff" fill-opacity="0.35"/>
<path d="M162.8 770.5H166.2M164.5 768.8V772.2" stroke="#fff" stroke-opacity="0.21" stroke-width="0.9" fill="none"/><rect x="163.9" y="769.9" width="1.2" height="1.2" fill="#fff" fill-opacity="0.35"/>
<path d="M314.5 772.1H317.9M316.2 770.4V773.8" stroke="#fff" stroke-opacity="0.57" stroke-width="0.9" fill="none"/><rect x="315.6" y="771.5" width="1.2" height="1.2" fill="#fff" fill-opacity="0.95"/>
<path d="M404.6 771.4H408.0M406.3 769.7V773.1" stroke="#fff" stroke-opacity="0.21" stroke-width="0.9" fill="none"/><rect x="405.7" y="770.8" width="1.2" height="1.2" fill="#fff" fill-opacity="0.35"/>
<path d="M521.7 771.4H525.1M523.4 769.7V773.1" stroke="#fff" stroke-opacity="0.57" stroke-width="0.9" fill="none"/><rect x="522.8" y="770.8" width="1.2" height="1.2" fill="#fff" fill-opacity="0.95"/>
<path d="M534.7 772.1H538.1M536.4 770.4V773.8" stroke="#fff" stroke-opacity="0.42" stroke-width="0.9" fill="none"/><rect x="535.8" y="771.5" width="1.2" height="1.2" fill="#fff" fill-opacity="0.7"/>
<path d="M115.6 785.4H119.0M117.3 783.7V787.1" stroke="#fff" stroke-opacity="0.57" stroke-width="0.9" fill="none"/><rect x="116.7" y="784.8" width="1.2" height="1.2" fill="#fff" fill-opacity="0.95"/>
<path d="M167.0 786.3H170.4M168.7 784.6V788.0" stroke="#fff" stroke-opacity="0.21" stroke-width="0.9" fill="none"/><rect x="168.1" y="785.7" width="1.2" height="1.2" fill="#fff" fill-opacity="0.35"/>
<path d="M228.5 786.3H231.9M230.2 784.6V788.0" stroke="#fff" stroke-opacity="0.42" stroke-width="0.9" fill="none"/><rect x="229.6" y="785.7" width="1.2" height="1.2" fill="#fff" fill-opacity="0.7"/>
<path d="M486.7 787.3H490.1M488.4 785.6V789.0" stroke="#fff" stroke-opacity="0.21" stroke-width="0.9" fill="none"/><rect x="487.8" y="786.7" width="1.2" height="1.2" fill="#fff" fill-opacity="0.35"/>
<path d="M498.9 786.3H502.3M500.6 784.6V788.0" stroke="#000" stroke-opacity="0.48" stroke-width="0.9" fill="none"/><rect x="500.0" y="785.7" width="1.2" height="1.2" fill="#000" fill-opacity="0.8"/>
<path d="M510.7 787.3H514.1M512.4 785.6V789.0" stroke="#fff" stroke-opacity="0.21" stroke-width="0.9" fill="none"/><rect x="511.8" y="786.7" width="1.2" height="1.2" fill="#fff" fill-opacity="0.35"/>
<path d="M549.6 785.4H553.0M551.3 783.7V787.1" stroke="#fff" stroke-opacity="0.42" stroke-width="0.9" fill="none"/><rect x="550.7" y="784.8" width="1.2" height="1.2" fill="#fff" fill-opacity="0.7"/>
<path d="M400.6 834.4H404.0M402.3 832.7V836.1" stroke="#fff" stroke-opacity="0.42" stroke-width="0.9" fill="none"/><rect x="401.7" y="833.8" width="1.2" height="1.2" fill="#fff" fill-opacity="0.7"/>
<path d="M112.6 850.2H116.0M114.3 848.5V851.9" stroke="#fff" stroke-opacity="0.57" stroke-width="0.9" fill="none"/><rect x="113.7" y="849.6" width="1.2" height="1.2" fill="#fff" fill-opacity="0.95"/>
<path d="M124.8 849.3H128.2M126.5 847.6V851.0" stroke="#fff" stroke-opacity="0.21" stroke-width="0.9" fill="none"/><rect x="125.9" y="848.7" width="1.2" height="1.2" fill="#fff" fill-opacity="0.35"/>
<path d="M153.7 849.3H157.1M155.4 847.6V851.0" stroke="#fff" stroke-opacity="0.57" stroke-width="0.9" fill="none"/><rect x="154.8" y="848.7" width="1.2" height="1.2" fill="#fff" fill-opacity="0.95"/>
<path d="M289.6 849.3H293.0M291.3 847.6V851.0" stroke="#fff" stroke-opacity="0.21" stroke-width="0.9" fill="none"/><rect x="290.7" y="848.7" width="1.2" height="1.2" fill="#fff" fill-opacity="0.35"/>
<path d="M387.8 850.2H391.2M389.5 848.5V851.9" stroke="#fff" stroke-opacity="0.21" stroke-width="0.9" fill="none"/><rect x="388.9" y="849.6" width="1.2" height="1.2" fill="#fff" fill-opacity="0.35"/>
<path d="M416.7 848.1H420.1M418.4 846.4V849.8" stroke="#fff" stroke-opacity="0.21" stroke-width="0.9" fill="none"/><rect x="417.8" y="847.5" width="1.2" height="1.2" fill="#fff" fill-opacity="0.35"/>
<path d="M467.5 849.3H470.9M469.2 847.6V851.0" stroke="#fff" stroke-opacity="0.42" stroke-width="0.9" fill="none"/><rect x="468.6" y="848.7" width="1.2" height="1.2" fill="#fff" fill-opacity="0.7"/>
<path d="M495.5 848.1H498.9M497.2 846.4V849.8" stroke="#fff" stroke-opacity="0.57" stroke-width="0.9" fill="none"/><rect x="496.6" y="847.5" width="1.2" height="1.2" fill="#fff" fill-opacity="0.95"/>
<path d="M517.7 848.1H521.1M519.4 846.4V849.8" stroke="#fff" stroke-opacity="0.42" stroke-width="0.9" fill="none"/><rect x="518.8" y="847.5" width="1.2" height="1.2" fill="#fff" fill-opacity="0.7"/>
<path d="M133.6 865.4H137.0M135.3 863.7V867.1" stroke="#fff" stroke-opacity="0.42" stroke-width="0.9" fill="none"/><rect x="134.7" y="864.8" width="1.2" height="1.2" fill="#fff" fill-opacity="0.7"/>
<path d="M249.5 865.4H252.9M251.2 863.7V867.1" stroke="#fff" stroke-opacity="0.42" stroke-width="0.9" fill="none"/><rect x="250.6" y="864.8" width="1.2" height="1.2" fill="#fff" fill-opacity="0.7"/>
<path d="M257.7 865.4H261.1M259.4 863.7V867.1" stroke="#fff" stroke-opacity="0.42" stroke-width="0.9" fill="none"/><rect x="258.8" y="864.8" width="1.2" height="1.2" fill="#fff" fill-opacity="0.7"/>
<path d="M488.8 863.3H492.2M490.5 861.6V865.0" stroke="#fff" stroke-opacity="0.21" stroke-width="0.9" fill="none"/><rect x="489.9" y="862.7" width="1.2" height="1.2" fill="#fff" fill-opacity="0.35"/>
<path d="M416.8 508.4H420.2M418.5 506.7V510.1" stroke="#fff" stroke-opacity="0.57" stroke-width="0.9" fill="none"/><rect x="417.9" y="507.8" width="1.2" height="1.2" fill="#fff" fill-opacity="0.95"/>
<path d="M401.9 520.3H405.3M403.6 518.6V522.0" stroke="#fff" stroke-opacity="0.42" stroke-width="0.9" fill="none"/><rect x="403.0" y="519.7" width="1.2" height="1.2" fill="#fff" fill-opacity="0.7"/>
<path d="M495.9 520.3H499.3M497.6 518.6V522.0" stroke="#fff" stroke-opacity="0.57" stroke-width="0.9" fill="none"/><rect x="497.0" y="519.7" width="1.2" height="1.2" fill="#fff" fill-opacity="0.95"/>
<path d="M501.8 535.5H505.2M503.5 533.8V537.2" stroke="#fff" stroke-opacity="0.21" stroke-width="0.9" fill="none"/><rect x="502.9" y="534.9" width="1.2" height="1.2" fill="#fff" fill-opacity="0.35"/>
<path d="M396.9 566.5H400.3M398.6 564.8V568.2" stroke="#fff" stroke-opacity="0.42" stroke-width="0.9" fill="none"/><rect x="398.0" y="565.9" width="1.2" height="1.2" fill="#fff" fill-opacity="0.7"/>
<path d="M476.9 565.5H480.3M478.6 563.8V567.2" stroke="#fff" stroke-opacity="0.21" stroke-width="0.9" fill="none"/><rect x="478.0" y="564.9" width="1.2" height="1.2" fill="#fff" fill-opacity="0.35"/>
<path d="M142.8 579.4H146.2M144.5 577.7V581.1" stroke="#fff" stroke-opacity="0.57" stroke-width="0.9" fill="none"/><rect x="143.9" y="578.8" width="1.2" height="1.2" fill="#fff" fill-opacity="0.95"/>
<path d="M512.8 508.4H516.2M514.5 506.7V510.1" stroke="#fff" stroke-opacity="0.57" stroke-width="0.9" fill="none"/><rect x="513.9" y="507.8" width="1.2" height="1.2" fill="#fff" fill-opacity="0.95"/>
<path d="M168.3 535H171.7M170 533.3V536.7" stroke="#fff" stroke-opacity="0.21" stroke-width="0.9" fill="none"/><rect x="169.4" y="534.4" width="1.2" height="1.2" fill="#fff" fill-opacity="0.35"/>
<path d="M189.3 537H192.7M191 535.3V538.7" stroke="#fff" stroke-opacity="0.42" stroke-width="0.9" fill="none"/><rect x="190.4" y="536.4" width="1.2" height="1.2" fill="#fff" fill-opacity="0.7"/>
<path d="M196.3 537H199.7M198 535.3V538.7" stroke="#fff" stroke-opacity="0.21" stroke-width="0.9" fill="none"/><rect x="197.4" y="536.4" width="1.2" height="1.2" fill="#fff" fill-opacity="0.35"/>
<path d="M231.3 534.5H234.7M233 532.8V536.2" stroke="#fff" stroke-opacity="0.21" stroke-width="0.9" fill="none"/><rect x="232.4" y="533.9" width="1.2" height="1.2" fill="#fff" fill-opacity="0.35"/>
<path d="M177.8 551.5H181.2M179.5 549.8V553.2" stroke="#000" stroke-opacity="0.48" stroke-width="0.9" fill="none"/><rect x="178.9" y="550.9" width="1.2" height="1.2" fill="#000" fill-opacity="0.8"/>
<path d="M236.8 565H240.2M238.5 563.3V566.7" stroke="#fff" stroke-opacity="0.42" stroke-width="0.9" fill="none"/><rect x="237.9" y="564.4" width="1.2" height="1.2" fill="#fff" fill-opacity="0.7"/>
<path d="M153.6 506.5H157.0M155.3 504.8V508.2" stroke="#fff" stroke-opacity="0.42" stroke-width="0.9" fill="none"/><rect x="154.7" y="505.9" width="1.2" height="1.2" fill="#fff" fill-opacity="0.7"/>
<path d="M172.3 507H175.7M174 505.3V508.7" stroke="#fff" stroke-opacity="0.42" stroke-width="0.9" fill="none"/><rect x="173.4" y="506.4" width="1.2" height="1.2" fill="#fff" fill-opacity="0.7"/>
<path d="M121.3 466.5H124.7M123 464.8V468.2" stroke="#fff" stroke-opacity="0.42" stroke-width="0.9" fill="none"/><rect x="122.4" y="465.9" width="1.2" height="1.2" fill="#fff" fill-opacity="0.7"/>
<path d="M131.3 479.5H134.7M133 477.8V481.2" stroke="#fff" stroke-opacity="0.57" stroke-width="0.9" fill="none"/><rect x="132.4" y="478.9" width="1.2" height="1.2" fill="#fff" fill-opacity="0.95"/>
<path d="M415.3 409.5H418.7M417 407.8V411.2" stroke="#fff" stroke-opacity="0.57" stroke-width="0.9" fill="none"/><rect x="416.4" y="408.9" width="1.2" height="1.2" fill="#fff" fill-opacity="0.95"/>
<polyline points="108.0,142.3 111.4,147.4 117.7,152.0 118.3,157.2 129.7,168.6 130.0,172.6 141.8,184.0 142.1,188.6 146.9,192.6 152.6,198.4 153.2,205.8 174.4,206.6 181.2,214.4 181.2,218.9 191.0,228.1 191.0,234.0 200.7,241.4 201.3,247.2 211.6,257.5 212.1,263.2 223.0,271.8 223.3,276.9 231.0,283.2 232.2,290.6 237.9,296.1 244.7,296.1 245.9,304.4 249.3,308.9 250.3,319.8 268.0,320.1 275.5,327.2 277.8,328.3 278.0,335.7 285.8,342.6 286.0,349.5 294.9,358.1 295.1,364.9 305.8,374.1 306.0,378.6 317.8,388.9 318.0,393.5 330.0,405.0 330.4,410.9 339.5,420.0 339.7,424.6 359.2,424.9 367.8,433.8 368.0,439.5 376.9,448.1 377.5,454.3 387.8,462.9 388.4,468.6 397.5,476.7 403.5,490.0 406.9,499.7 410.9,504.9 411.8,512.9 418.3,513.2 420.0,517.5 420.3,524.3 422.1,529.8 437.2,530.0 442.4,531.2 445.2,534.6 445.2,541.5 452.7,548.9 453.2,555.2 461.8,563.2 462.4,570.7 471.0,578.1 472.1,582.1" fill="none" stroke="#6cc9fb" stroke-width="2.5" stroke-linejoin="round" stroke-linecap="round"/>
<polyline points="107.0,44.0 107.0,143.4 109.7,145.7 108.0,148.6 108.0,152.6 111.4,154.9 110.3,157.2 114.3,160.6 108.6,162.9 116.6,169.2 108.0,170.9 113.7,176.0 108.0,177.2 115.4,183.5 108.0,185.8 111.4,190.3 108.0,192.6 112.6,198.4 107.0,199.5 107.0,205.8 122.9,206.4 128.6,212.1 117.2,215.5 121.2,220.1 117.2,221.8 124.6,227.5 113.2,230.4 120.6,238.0 114.3,239.7 118.3,241.4 117.2,243.7 108.0,246.0 117.7,254.6 112.0,257.5 107.0,260.9 117.7,270.6 111.4,273.5 122.9,286.1 116.0,288.4 125.2,295.8 119.5,296.1 124.6,300.9 117.2,303.2 121.2,308.9 115.4,311.2 117.2,315.8 107.0,318.1 107.0,320.5 124.0,320.6 130.7,323.7 124.6,325.7 128.6,330.9 117.2,333.2 122.3,338.3 117.2,340.6 121.2,342.9 120.6,349.7 125.7,353.2 112.6,360.0 107.0,364.0 111.4,366.9 107.0,370.3 111.4,374.9 110.9,379.5 114.9,382.4 109.7,384.1 116.6,388.6 116.0,393.2 119.5,396.1 113.7,397.8 121.2,404.1 121.7,411.5 117.7,412.9 125.4,418.6 125.4,420.9 120.6,421.4 120.6,424.9 140.0,424.9 140.0,427.2 135.5,427.7 143.5,434.0 136.6,436.9 142.9,443.8 139.5,444.9 143.5,449.5 136.6,451.2 136.6,454.0 143.5,458.6 137.8,460.3 142.6,463.2 130.3,467.8 142.3,478.1 136.6,481.5 143.5,492.4 137.8,494.1 140.0,501.5 144.3,506.0 137.8,508.3 138.3,512.6 146.3,514.3 139.5,517.7 141.2,521.2 134.9,522.9 135.5,530.3 156.6,530.7 150.3,532.0 153.2,536.6 146.3,537.8 152.1,544.6 148.0,546.9 150.3,550.3 150.9,556.0 144.0,561.8 145.8,565.2 148.0,571.5 143.5,574.9 133.7,579.5 133.7,582.4" fill="none" stroke="#ff9f0a" stroke-width="2.4" stroke-linejoin="round" clip-path="url(#oc)"/>
<g shape-rendering="crispEdges">
<rect x="481" y="44" width="2" height="830" fill="#ee3850"/>
<rect x="108" y="44" width="448" height="1" fill="#f23a55"/>
</g>
</svg>
<svg width="8" height="8" style="position:absolute;left:99px;top:477px"><circle cx="3.6" cy="4" r="2.8" fill="#4c4c4c"/></svg>
<svg width="8" height="8" style="position:absolute;left:554px;top:477px"><circle cx="4.2" cy="4" r="2.8" fill="#4a4a4a"/></svg>
<div id="txt">
<div class="ln" style="top:-5.97px"><span style="letter-spacing:0.805px">0000 00:00:00 </span><span style="letter-spacing:-0.015px">INSTRUME: XRT: OBSERVER: VELASQUEZ,Joy</span></div>
<div class="ln" style="top:30.53px"><span style="letter-spacing:0.743px">0006 04:00:00 </span><span style="letter-spacing:-0.002px">XRT_BAD_PHOTO_ENTRY: XRT_SAA_ENTRY</span></div>
<div class="ln" style="top:42.53px"><span style="letter-spacing:0.586px">0033 05:24:30 </span><span style="letter-spacing:0.072px">XRT_BAD_PHOTO_ENTRY_2: XRT_SAA_ENTRY_2</span></div>
<div class="ln" style="top:55.53px"><span style="letter-spacing:0.519px">0051 06:47:00 </span><span style="letter-spacing:0.064px">XRT_HLA_ENTRY_8</span></div>
<div class="ln" style="top:67.53px"><span style="letter-spacing:0.609px">0078 08:06:55 </span><span style="letter-spacing:0.423px">TI_after_OP_Upload:  (No pause)</span></div>
<div class="ln" style="top:80.53px"><span style="letter-spacing:0.519px">0120 09:34:55 </span><span style="letter-spacing:0.009px">XRT_MAIN_START_3: XRT_SANT_AOS_12</span></div>
<div class="ln" style="top:92.53px"><span style="letter-spacing:0.430px">0216 10:54:55 </span><span style="letter-spacing:0.167px">XRT_OBS_REPRO_STOP_9: Download End</span></div>
<div class="ln" style="top:104.53px"><span style="letter-spacing:0.386px">0494 12:14:30 </span><span style="letter-spacing:0.419px">XRT_HLA_ENTRY_21: Dur: 005,00.0 M,Ix 15 (256),1-&gt;3,0-&gt;0,safe,VLS shut,norm,res 1x1,ROI 1064,1048,384x384,reg 5,buf Preflare-1,DMF KSC,SSOC,comp 43.8%,00 00:00</span></div>
<div class="ln" style="top:118.53px"><span style="letter-spacing:0.497px">0780 13:53:00 </span><span style="letter-spacing:-0.018px">XRT_HLA_ENTRY_25</span></div>
<div class="ln" style="top:133.53px"><span style="letter-spacing:0.207px">1069 15:31:00 </span><span style="letter-spacing:0.042px">XRT_HLA_ENTRY_29</span></div>
<div class="ln" style="top:148.53px"><span style="letter-spacing:0.408px">1355 17:09:00 </span><span style="letter-spacing:0.060px">XRT_HLA_ENTRY_33</span></div>
<div class="ln" style="top:163.53px"><span style="letter-spacing:0.386px">1645 18:47:30 </span><span style="letter-spacing:0.004px">XRT_HLA_ENTRY_37</span></div>
<div class="ln" style="top:177.53px"><span style="letter-spacing:0.341px">1915 20:25:30 </span><span style="letter-spacing:-0.013px">XRT_HLA_ENTRY_41</span></div>
<div class="ln" style="top:190.53px"><span style="letter-spacing:0.029px">2121 21:47:15 </span><span style="letter-spacing:0.223px">Data rate event: XRT_OBS_REPRO_STOP_last_3</span></div>
<div class="ln" style="top:202.53px"><span style="letter-spacing:0.631px">2340 23:08:30 </span><span style="letter-spacing:0.102px">XRT_HLA_ENTRY_48</span></div>
<div class="ln" style="top:214.53px"><span style="letter-spacing:0.430px">2572 00:31:00 </span><span style="letter-spacing:0.022px">XRT_HLA_ENTRY_51</span></div>
<div class="ln" style="top:226.53px"><span style="letter-spacing:0.252px">2781 01:47:30 </span><span style="letter-spacing:0.138px">XRT_XTW_EXIT_14: XRT_BAD_PHOTO_EXIT_14</span></div>
<div class="ln" style="top:238.53px"><span style="letter-spacing:0.542px">3022 03:10:30 </span><span style="letter-spacing:0.165px">XRT_OBS_REPRO_STOP_29: Download End</span></div>
<div class="ln" style="top:250.53px"><span style="letter-spacing:0.653px">3209 04:29:38 </span><span style="letter-spacing:-0.164px">MDP_XRT_PREFLR_STOP</span></div>
<div class="ln" style="top:262.53px"><span style="letter-spacing:0.564px">3252 05:46:50 </span><span style="letter-spacing:0.211px">Data rate event: XRT_OBS_REPRO_STOP_32</span></div>
<div class="ln" style="top:274.53px"><span style="letter-spacing:0.653px">3409 07:09:00 </span><span style="letter-spacing:0.127px">XRT_HLA_EXIT_67</span></div>
<div class="ln" style="top:286.53px"><span style="letter-spacing:0.430px">3583 08:31:05 </span><span style="letter-spacing:0.088px">XRT_SANT_AOS_55</span></div>
<div class="ln" style="top:298.53px"><span style="letter-spacing:0.430px">3771 09:52:00 </span><span style="letter-spacing:0.062px">XRT_HLA_EXIT_74</span></div>
<div class="ln" style="top:310.53px"><span style="letter-spacing:0.371px">4010 11:09:00 </span><span style="letter-spacing:-0.037px">XRT_HLA_ENTRY_77</span></div>
<div class="ln" style="top:322.53px"><span style="letter-spacing:0.296px">4217 12:27:20 </span><span style="letter-spacing:0.236px">Data rate event: XRT_OBS_REPRO_STOP_42</span></div>
<div class="ln" style="top:334.53px"><span style="letter-spacing:0.386px">4441 13:48:10 </span><span style="letter-spacing:0.227px">Data rate event: XRT_OBS_REPRO_STOP_43</span></div>
<div class="ln" style="top:346.53px"><span style="letter-spacing:0.319px">4679 15:13:05 </span><span style="letter-spacing:0.132px">XRT_SANT_AOS_66</span></div>
<div class="ln" style="top:358.53px"><span style="letter-spacing:0.564px">4892 16:30:30 </span><span style="letter-spacing:0.213px">XRT_XTW_EXIT_23</span></div>
<div class="ln" style="top:370.53px"><span style="letter-spacing:0.296px">5137 17:47:00 </span><span style="letter-spacing:0.187px">XRT_HLA_EXIT_93</span></div>
<div class="ln" style="top:383.53px"><span style="letter-spacing:0.475px">5394 19:19:30 </span><span style="letter-spacing:0.045px">XRT_HLA_ENTRY_97</span></div>
<div class="ln" style="top:395.53px"><span style="letter-spacing:0.519px">5588 20:37:40 </span><span style="letter-spacing:0.254px">Data rate event: XRT_OBS_REPRO_STOP_49</span></div>
<div class="ln" style="top:408.53px"><span style="letter-spacing:0.609px">5802 22:02:30 </span><span style="letter-spacing:0.399px">XRT_HLA_ENTRY_104: Dur: 005,774.K,Ix 15 (256),1-&gt;3,0-&gt;0,safe,VLS shut,norm,res 1x1,ROI 1064,1048,384x384,reg 8,buf Regular,DMF KSC,SSOC,comp 43.8%,00 00:00</span></div>
<div class="ln" style="top:420.53px"><span style="letter-spacing:0.586px">6035 23:25:00 </span><span style="letter-spacing:-0.065px">XRT_HLA_ENTRY_107</span></div>
<div class="ln" style="top:432.53px"><span style="letter-spacing:0.386px">6214 00:41:30 </span><span style="letter-spacing:0.260px">XRT_XTW_EXIT_28: XRT_BAD_PHOTO_EXIT_30</span></div>
<div class="ln" style="top:444.53px"><span style="letter-spacing:0.564px">6266 02:05:25 </span><span style="letter-spacing:0.210px">XRT_OBS_REPRO_STOP_54: Download End</span></div>
<div class="ln" style="top:456.53px"><span style="letter-spacing:0.653px">6302 03:22:30 </span><span style="letter-spacing:0.097px">XRT_SAA_ENTRY_27: XRT_BAD_PHOTO_ENTRY_32</span></div>
<div class="ln" style="top:468.53px"><span style="letter-spacing:0.453px">6378 04:41:00 </span><span style="letter-spacing:0.041px">XRT_HLA_EXIT_120</span></div>
<div class="ln" style="top:480.53px"><span style="letter-spacing:0.386px">6417 06:01:54 </span><span style="letter-spacing:0.451px">MDP_XRT_CTRL_MANU: Synoptic_4: HOP448_8filter</span></div>
<div class="ln" style="top:494.53px"><span style="letter-spacing:0.586px">6645 07:36:00 </span><span style="letter-spacing:-0.047px">XRT_HLA_ENTRY_127</span></div>
<div class="ln" style="top:507.53px"><span style="letter-spacing:0.519px">6823 09:01:50 </span><span style="letter-spacing:0.172px">XRT_XANT_A_AOS_USC_2: XRT_SANT_AOS_90</span></div>
<div class="ln" style="top:519.53px"><span style="letter-spacing:0.453px">7023 10:24:30 </span><span style="letter-spacing:0.130px">XRT_HLA_EXIT_134: XRT_SANT_AOS_93</span></div>
<div class="ln" style="top:531.53px"><span style="letter-spacing:0.237px">7292 11:41:00 </span><span style="letter-spacing:-0.087px">XRT_HLA_ENTRY_137</span></div>
<div class="ln" style="top:545.53px"><span style="letter-spacing:0.353px">7350 13:19:00 </span><span style="letter-spacing:-0.096px">XRT_HLA_ENTRY_141</span></div>
<div class="ln" style="top:560.53px"><span style="letter-spacing:0.449px">7366 14:57:30 </span><span style="letter-spacing:-0.022px">XRT_HLA_ENTRY_145</span></div>
<div class="ln" style="top:575.53px"><span style="letter-spacing:0.425px">7384 16:35:30 </span><span style="letter-spacing:-0.003px">XRT_HLA_ENTRY_149</span></div>
<div class="ln" style="top:590.53px"><span style="letter-spacing:0.305px">7408 18:13:30 </span><span style="letter-spacing:-0.021px">XRT_HLA_ENTRY_153</span></div>
<div class="ln" style="top:604.53px"><span style="letter-spacing:0.473px">7436 19:52:00 </span><span style="letter-spacing:-0.042px">XRT_HLA_ENTRY_157</span></div>
<div class="ln" style="top:616.53px"><span style="letter-spacing:0.257px">7462 21:13:00 </span><span style="letter-spacing:0.103px">XRT_OBS_REPRO_STOP_last_7</span></div>
<div class="ln" style="top:629.53px"><span style="letter-spacing:0.497px">7490 22:35:00 </span><span style="letter-spacing:-0.027px">XRT_HLA_ENTRY_164</span></div>
<div class="ln" style="top:641.53px"><span style="letter-spacing:0.473px">7520 23:57:25 </span><span style="letter-spacing:0.049px">XRT_OBS_REPRO_STOP_81</span></div>
<div class="ln" style="top:653.53px"><span style="letter-spacing:0.329px">7538 01:13:30 </span><span style="letter-spacing:0.297px">XRT_XTW_EXIT_43: XRT_BAD_PHOTO_EXIT_46</span></div>
<div class="ln" style="top:665.53px"><span style="letter-spacing:0.233px">7551 02:37:15 </span><span style="letter-spacing:0.128px">XRT_OBS_REPRO_STOP_83</span></div>
<div class="ln" style="top:677.53px"><span style="letter-spacing:0.617px">7568 03:53:30 </span><span style="letter-spacing:0.132px">XRT_BAD_PHOTO_ENTRY_48: XRT_SAA_ENTRY_41</span></div>
<div class="ln" style="top:689.53px"><span style="letter-spacing:0.377px">7588 05:13:25 </span><span style="letter-spacing:0.146px">XRT_OBS_REPRO_STOP_86</span></div>
<div class="ln" style="top:701.53px"><span style="letter-spacing:0.521px">7607 06:35:30 </span><span style="letter-spacing:0.018px">XRT_HLA_EXIT_183</span></div>
<div class="ln" style="top:713.53px"><span style="letter-spacing:0.593px">7634 07:59:00 </span><span style="letter-spacing:-0.027px">XRT_SANT_AOS_135</span></div>
<div class="ln" style="top:725.53px"><span style="letter-spacing:0.473px">7655 09:16:20 </span><span style="letter-spacing:0.110px">XRT_OBS_REPRO_STOP_90</span></div>
<div class="ln" style="top:737.53px"><span style="letter-spacing:0.473px">7676 10:35:00 </span><span style="letter-spacing:-0.066px">XRT_HLA_ENTRY_193</span></div>
<div class="ln" style="top:750.53px"><span style="letter-spacing:0.377px">7700 12:02:50 </span><span style="letter-spacing:-0.006px">XRT_SANT_AOS_143</span></div>
<div class="ln" style="top:762.53px"><span style="letter-spacing:0.305px">7719 13:24:00 </span><span style="letter-spacing:0.208px">XRT_HLA_EXIT_200</span></div>
<div class="ln" style="top:774.53px"><span style="letter-spacing:0.425px">7728 14:40:20 </span><span style="letter-spacing:0.014px">XRT_SANT_AOS_145</span></div>
<div class="ln" style="top:788.53px"><span style="letter-spacing:0.209px">7746 16:17:40 </span><span style="letter-spacing:-0.003px">XRT_SANT_AOS_146</span></div>
<div class="ln" style="top:800.53px"><span style="letter-spacing:0.305px">7765 17:35:00 </span><span style="letter-spacing:0.321px">XRT_XTW_EXIT_53</span></div>
<div class="ln" style="top:812.53px"><span style="letter-spacing:0.353px">7782 18:55:50 </span><span style="letter-spacing:-0.004px">XRT_SANT_AOS_150</span></div>
<div class="ln" style="top:824.53px"><span style="letter-spacing:0.617px">7804 20:24:00 </span><span style="letter-spacing:-0.002px">XRT_HLA_ENTRY_217</span></div>
</div>
<div id="sb"><div id="th"></div></div>
</body></html>
